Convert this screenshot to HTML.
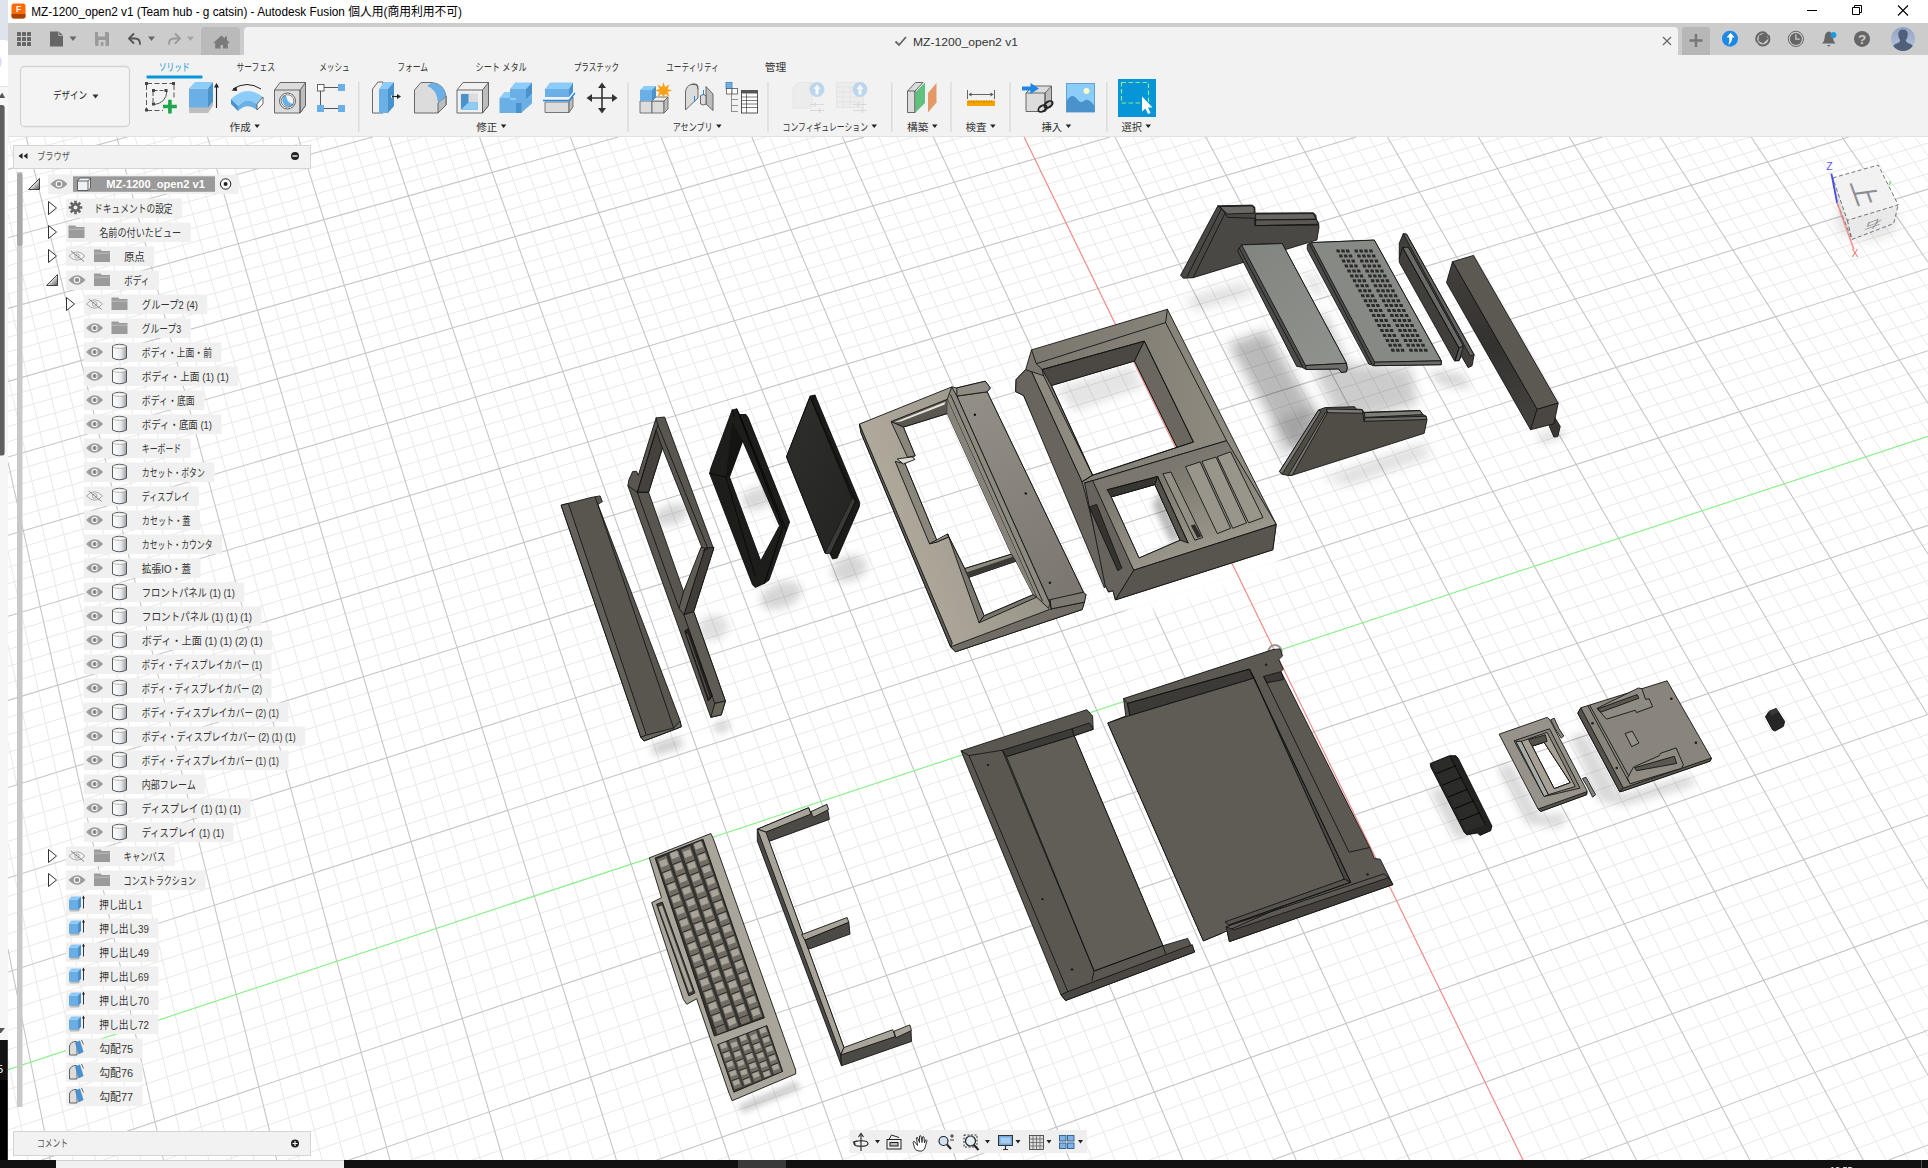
<!DOCTYPE html>
<html lang="ja"><head><meta charset="utf-8"><title>MZ-1200_open2 v1 - Autodesk Fusion</title>
<style>*{margin:0;padding:0}html,body{width:1928px;height:1168px;overflow:hidden;background:#fff}svg{display:block;position:absolute;left:0;top:0}text{font-family:'Liberation Sans','Noto Sans CJK JP',sans-serif;white-space:pre}</style></head><body>
<svg width="1928" height="1168" viewBox="0 0 1928 1168">
<defs><clipPath id="vpc"><rect x="8" y="137" width="1920" height="1023"/></clipPath>
<linearGradient id="avg" x1="0" y1="0" x2="0" y2="1"><stop offset="0" stop-color="#8fa3c4"/><stop offset="1" stop-color="#b9c6dc"/></linearGradient>
<linearGradient id="cyl" x1="0" y1="0" x2="1" y2="0"><stop offset="0" stop-color="#ffffff"/><stop offset="0.600" stop-color="#e8eaee"/><stop offset="1" stop-color="#9aa0aa"/></linearGradient>
<linearGradient id="expg" x1="0" y1="0" x2="1" y2="1"><stop offset="0.400" stop-color="#fff"/><stop offset="1" stop-color="#555"/></linearGradient>
<filter id="blur6" x="-30%" y="-30%" width="160%" height="160%"><feGaussianBlur stdDeviation="6"/></filter>
<filter id="blur4" x="-30%" y="-30%" width="160%" height="160%"><feGaussianBlur stdDeviation="4"/></filter>
<filter id="blur3" x="-30%" y="-30%" width="160%" height="160%"><feGaussianBlur stdDeviation="3"/></filter>
<linearGradient id="pan4" x1="0" y1="0" x2="1" y2="1"><stop offset="0" stop-color="#2f2f2e"/><stop offset="1" stop-color="#232322"/></linearGradient>
<linearGradient id="g5" gradientUnits="userSpaceOnUse" x1="860" y1="500" x2="1060" y2="440"><stop offset="0" stop-color="#b3ad9f"/><stop offset="1" stop-color="#8f8b81"/></linearGradient>
<linearGradient id="g5b" gradientUnits="userSpaceOnUse" x1="960" y1="390" x2="1080" y2="600"><stop offset="0" stop-color="#949087"/><stop offset="1" stop-color="#7a766f"/></linearGradient>
<linearGradient id="g6" gradientUnits="userSpaceOnUse" x1="1030" y1="380" x2="1250" y2="420"><stop offset="0" stop-color="#7b776e"/><stop offset="1" stop-color="#908c82"/></linearGradient>
<linearGradient id="g8" gradientUnits="userSpaceOnUse" x1="1250" y1="250" x2="1330" y2="360"><stop offset="0" stop-color="#838581"/><stop offset="1" stop-color="#8f918c"/></linearGradient>
<linearGradient id="g11" gradientUnits="userSpaceOnUse" x1="1450" y1="270" x2="1540" y2="420"><stop offset="0" stop-color="#413f3b"/><stop offset="0.5" stop-color="#34322f"/><stop offset="1" stop-color="#45433f"/></linearGradient>
<linearGradient id="g6p" gradientUnits="userSpaceOnUse" x1="1160" y1="470" x2="1200" y2="570"><stop offset="0" stop-color="#7b776e"/><stop offset="1" stop-color="#a19c90"/></linearGradient>

</defs>
<g clip-path="url(#vpc)">
<path d="M8.0 1059.6L27.7 1160.0M8.0 843.3L73.0 1160.0M8.0 742.0L95.6 1160.0M8.0 644.8L118.2 1160.0M8.0 551.6L140.9 1160.0M8.0 376.0L186.1 1160.0M8.0 293.2L208.8 1160.0M8.0 213.5L231.4 1160.0M8.0 142.6L28.9 137.0M8.1 137.0L254.1 1160.0M8.0 156.0L78.0 137.0M44.3 137.0L299.3 1160.0M8.0 182.9L176.2 137.0M62.4 137.0L322.0 1160.0M8.0 196.4L225.3 137.0M80.6 137.0L344.6 1160.0M8.0 210.1L274.5 137.0M98.7 137.0L367.3 1160.0M8.0 223.9L323.6 137.0M135.0 137.0L412.5 1160.0M8.0 251.7L421.9 137.0M153.1 137.0L435.2 1160.0M8.0 265.7L471.0 137.0M171.2 137.0L457.8 1160.0M8.0 279.8L520.1 137.0M189.4 137.0L480.5 1160.0M8.0 294.0L569.3 137.0M225.6 137.0L525.8 1160.0M8.0 322.8L667.6 137.0M243.8 137.0L548.4 1160.0M8.0 337.3L716.8 137.0M261.9 137.0L571.1 1160.0M8.0 351.9L765.9 137.0M280.0 137.0L593.7 1160.0M8.0 366.6L815.1 137.0M316.3 137.0L639.0 1160.0M8.0 396.3L913.5 137.0M334.4 137.0L661.7 1160.0M8.0 411.3L962.6 137.0M352.6 137.0L684.3 1160.0M8.0 426.5L1011.8 137.0M370.7 137.0L707.0 1160.0M8.0 441.7L1061.0 137.0M407.0 137.0L752.3 1160.0M8.0 472.4L1159.4 137.0M425.1 137.0L774.9 1160.0M8.0 488.0L1208.6 137.0M443.3 137.0L797.6 1160.0M8.0 503.6L1257.9 137.0M461.4 137.0L820.2 1160.0M8.0 519.4L1307.1 137.0M497.7 137.0L865.6 1160.0M8.0 551.2L1405.5 137.0M515.9 137.0L888.2 1160.0M8.0 567.3L1454.8 137.0M534.0 137.0L910.9 1160.0M8.0 583.6L1504.0 137.0M552.1 137.0L933.5 1160.0M8.0 599.9L1553.2 137.0M588.4 137.0L978.9 1160.0M8.0 632.9L1651.7 137.0M606.6 137.0L1001.5 1160.0M8.0 649.6L1701.0 137.0M624.7 137.0L1024.2 1160.0M8.0 666.4L1750.3 137.0M642.9 137.0L1046.9 1160.0M8.0 683.3L1799.5 137.0M679.2 137.0L1092.2 1160.0M8.0 717.5L1898.1 137.0M697.3 137.0L1114.9 1160.0M8.0 734.8L1928.0 143.0M715.5 137.0L1137.5 1160.0M8.0 752.3L1928.0 158.2M733.6 137.0L1160.2 1160.0M8.0 769.8L1928.0 173.6M769.9 137.0L1205.5 1160.0M8.0 805.3L1928.0 204.7M788.1 137.0L1228.2 1160.0M8.0 823.3L1928.0 220.5M806.2 137.0L1250.9 1160.0M8.0 841.4L1928.0 236.3M824.4 137.0L1273.6 1160.0M8.0 859.6L1928.0 252.3M860.7 137.0L1318.9 1160.0M8.0 896.5L1928.0 284.6M878.9 137.0L1341.6 1160.0M8.0 915.2L1928.0 300.9M897.0 137.0L1364.3 1160.0M8.0 933.9L1928.0 317.4M915.2 137.0L1386.9 1160.0M8.0 952.9L1928.0 334.0M951.5 137.0L1432.3 1160.0M8.0 991.2L1928.0 367.5M969.7 137.0L1455.0 1160.0M8.0 1010.6L1928.0 384.5M987.8 137.0L1477.6 1160.0M8.0 1030.1L1928.0 401.6M1006.0 137.0L1500.3 1160.0M8.0 1049.8L1928.0 418.9M1042.3 137.0L1545.7 1160.0M8.0 1089.7L1928.0 453.8M1060.5 137.0L1568.4 1160.0M8.0 1109.8L1928.0 471.4M1078.6 137.0L1591.1 1160.0M8.0 1130.1L1928.0 489.2M1096.8 137.0L1613.7 1160.0M8.0 1150.6L1928.0 507.2M1133.1 137.0L1659.1 1160.0M103.0 1160.0L1928.0 543.5M1151.3 137.0L1681.8 1160.0M164.5 1160.0L1928.0 561.9M1169.4 137.0L1704.5 1160.0M226.0 1160.0L1928.0 580.4M1187.6 137.0L1727.2 1160.0M287.5 1160.0L1928.0 599.1M1223.9 137.0L1772.6 1160.0M410.5 1160.0L1928.0 637.0M1242.1 137.0L1795.2 1160.0M472.1 1160.0L1928.0 656.1M1260.3 137.0L1817.9 1160.0M533.6 1160.0L1928.0 675.4M1278.5 137.0L1840.6 1160.0M595.1 1160.0L1928.0 694.9M1314.8 137.0L1886.0 1160.0M718.2 1160.0L1928.0 734.3M1333.0 137.0L1908.7 1160.0M779.8 1160.0L1928.0 754.3M1351.1 137.0L1928.0 1154.0M841.4 1160.0L1928.0 774.4M1369.3 137.0L1928.0 1114.3M902.9 1160.0L1928.0 794.7M1405.7 137.0L1928.0 1036.8M1026.1 1160.0L1928.0 835.9M1423.8 137.0L1928.0 998.9M1087.7 1160.0L1928.0 856.7M1442.0 137.0L1928.0 961.6M1149.3 1160.0L1928.0 877.7M1460.2 137.0L1928.0 924.9M1210.8 1160.0L1928.0 899.0M1496.5 137.0L1928.0 853.0M1334.1 1160.0L1928.0 941.9M1514.7 137.0L1928.0 817.8M1395.7 1160.0L1928.0 963.7M1532.9 137.0L1928.0 783.2M1457.3 1160.0L1928.0 985.7M1551.1 137.0L1928.0 749.0M1518.9 1160.0L1928.0 1007.8M1587.4 137.0L1928.0 682.1M1642.2 1160.0L1928.0 1052.7M1605.6 137.0L1928.0 649.4M1703.8 1160.0L1928.0 1075.5M1623.8 137.0L1928.0 617.1M1765.5 1160.0L1928.0 1098.5M1642.0 137.0L1928.0 585.3M1827.1 1160.0L1928.0 1121.6M1678.4 137.0L1928.0 522.9M1696.5 137.0L1928.0 492.4M1714.7 137.0L1928.0 462.3M1732.9 137.0L1928.0 432.5M1769.3 137.0L1928.0 374.2M1787.5 137.0L1928.0 345.7M1805.7 137.0L1928.0 317.5M1823.9 137.0L1928.0 289.7M1860.2 137.0L1928.0 235.1M1878.4 137.0L1928.0 208.3M1896.6 137.0L1928.0 181.8M1914.8 137.0L1928.0 155.7" stroke="#e9e9e9" stroke-width="1" fill="none"/>
<path d="M8.0 949.1L50.3 1160.0M8.0 462.1L163.5 1160.0M26.2 137.0L276.7 1160.0M8.0 169.4L127.1 137.0M116.8 137.0L389.9 1160.0M8.0 237.7L372.7 137.0M207.5 137.0L503.1 1160.0M8.0 308.4L618.4 137.0M298.2 137.0L616.4 1160.0M8.0 381.4L864.3 137.0M388.9 137.0L729.6 1160.0M8.0 457.0L1110.2 137.0M479.6 137.0L842.9 1160.0M8.0 535.3L1356.3 137.0M570.3 137.0L956.2 1160.0M8.0 616.3L1602.5 137.0M661.0 137.0L1069.5 1160.0M8.0 700.4L1848.8 137.0M751.8 137.0L1182.9 1160.0M8.0 787.5L1928.0 189.1M842.5 137.0L1296.2 1160.0M8.0 878.0L1928.0 268.4M933.3 137.0L1409.6 1160.0M8.0 972.0L1928.0 350.7M1114.9 137.0L1636.4 1160.0M41.5 1160.0L1928.0 525.3M1205.8 137.0L1749.9 1160.0M349.0 1160.0L1928.0 618.0M1296.6 137.0L1863.3 1160.0M656.7 1160.0L1928.0 714.5M1387.5 137.0L1928.0 1075.3M964.5 1160.0L1928.0 815.2M1478.4 137.0L1928.0 888.7M1272.5 1160.0L1928.0 920.3M1569.3 137.0L1928.0 715.3M1580.5 1160.0L1928.0 1030.2M1660.2 137.0L1928.0 553.9M1888.8 1160.0L1928.0 1145.0M1751.1 137.0L1928.0 403.2M1842.0 137.0L1928.0 262.2" stroke="#c6c6c6" stroke-width="1.1" fill="none"/>
<path d="M650.4 746.1L678.7 737.1L683.8 746.1L655.6 755.1Z" fill="#000" fill-opacity="0.22" filter="url(#blur4)"/>
<path d="M1119.1 597.3L1273.1 546.8L1283.7 568.1L1132.4 618.5 Z" fill="#fff" fill-opacity="0.95" filter="url(#blur4)"/>
<path d="M1055.4 387.6L1132.4 365.0L1143.0 387.6L1074.0 411.5Z" fill="#000" fill-opacity="0.1" filter="url(#blur4)"/>
<path d="M1183.7 299.6L1241.9 282.5L1259.0 292.7L1195.7 309.9Z" fill="#000" fill-opacity="0.13" filter="url(#blur6)"/>
<path d="M1427.8 369.7L1463.3 373.6L1471.2 389.3L1439.7 385.4Z" fill="#000" fill-opacity="0.15" filter="url(#blur4)"/>
<path d="M1536.1 434.6L1561.7 426.8L1565.7 436.6L1542.1 444.5Z" fill="#000" fill-opacity="0.12" filter="url(#blur4)"/>
<path d="M1270.6 423.0L1317.3 404.3L1302.3 441.7L1279.0 460.4Z" fill="#000" fill-opacity="0.12" filter="url(#blur6)"/>
<path d="M1321.0 479.0L1423.7 443.5L1431.2 454.8L1349.0 484.6Z" fill="#000" fill-opacity="0.14" filter="url(#blur6)"/>
<path d="M737.6 1105.6L796.2 1081.2L801.0 1088.5L742.5 1112.9Z" fill="#000" fill-opacity="0.2" filter="url(#blur3)"/>
<path d="M1429.6 791.1L1444.0 786.3L1470.3 835.4L1456.0 839.0Z" fill="#000" fill-opacity="0.16" filter="url(#blur4)"/>
<path d="M1496.7 767.1L1511.1 762.3L1539.9 815.1L1567.4 812.7L1561.4 827.1L1527.9 824.7Z" fill="#000" fill-opacity="0.15" filter="url(#blur4)"/>
<path d="M1570.0 737.1L1584.4 732.3L1620.3 794.7L1689.9 775.5L1695.9 785.1L1623.9 805.4L1600.0 801.8Z" fill="#000" fill-opacity="0.15" filter="url(#blur4)"/>
<ellipse cx="671.2" cy="514.6" rx="18.0" ry="10.1" fill="#000" fill-opacity="0.16" transform="rotate(-20 671.2 514.6)" filter="url(#blur4)"/>
<ellipse cx="712.6" cy="627.9" rx="16.2" ry="12.6" fill="#000" fill-opacity="0.12" transform="rotate(-20 712.6 627.9)" filter="url(#blur4)"/>
<ellipse cx="721.6" cy="726.8" rx="9.0" ry="6.5" fill="#000" fill-opacity="0.14" transform="rotate(-20 721.6 726.8)" filter="url(#blur3)"/>
<ellipse cx="757.6" cy="498.4" rx="16.1" ry="10.8" fill="#000" fill-opacity="0.15" transform="rotate(-20 757.6 498.4)" filter="url(#blur4)"/>
<ellipse cx="780.9" cy="595.5" rx="21.6" ry="12.6" fill="#000" fill-opacity="0.16" transform="rotate(-20 780.9 595.5)" filter="url(#blur4)"/>
<ellipse cx="849.2" cy="568.6" rx="18.0" ry="12.5" fill="#000" fill-opacity="0.16" transform="rotate(-20 849.2 568.6)" filter="url(#blur4)"/>
<path d="M1228.0 343.9L1265.9 330.5L1330.6 435.3L1294.9 453.2L1268.1 413.0Z" fill="#000" fill-opacity="0.27" filter="url(#blur6)"/>
<path d="M1323.9 310.4L1348.4 364.0L1410.9 368.4L1417.6 404.1L1370.7 415.3L1344.0 433.1L1317.2 377.3L1310.5 323.8Z" fill="#000" fill-opacity="0.2" filter="url(#blur6)"/>
<path d="M1301.6 270.3L1315.0 274.8L1326.1 297.1L1312.7 294.8Z" fill="#000" fill-opacity="0.1" filter="url(#blur4)"/>
<path d="M1160.3 491.1L1181.5 538.9L1170.9 542.9L1152.3 504.4Z" fill="#000" fill-opacity="0.28" filter="url(#blur3)"/>
<path d="M1024.1 137.0L1523.0 1160.0" stroke="#f08a8a" stroke-width="1.2" fill="none"/>
<path d="M8.0 1069.7L1928.0 436.3" stroke="#8cf08c" stroke-width="1.2" fill="none"/>
<path d="M561.1 505.2L590.9 497.5L600.1 495.9L602.4 501.6L598.0 504.2L599.1 507.5L680.0 720.4L681.3 726.8L673.6 729.9L644.0 741.0L640.7 737.1Z" fill="#595650" stroke="#151515" stroke-width="0.9" stroke-linejoin="round" />
<path d="M561.1 505.2L568.3 503.4L646.6 735.8L640.7 737.1Z" fill="#64615b" stroke="#151515" stroke-width="0.9" stroke-linejoin="round" />
<path d="M640.7 737.1L644.0 741.0L681.3 726.8L680.0 721.2L673.6 728.1L646.6 735.1Z" fill="#6a6761" stroke="#151515" stroke-width="0.9" stroke-linejoin="round" />
<path d="M595.2 497.0L673.6 728.1" fill="none" stroke="#151515" stroke-width="0.9" stroke-linecap="round" stroke-linejoin="round" />
<path d="M656.1 417.9L664.6 417.0L713.6 548.8L693.7 611.6L725.4 701.0L721.3 714.9L710.8 717.3L627.9 485.7L628.8 480.1L632.6 471.6L636.4 471.2L638.3 475.3ZM662.4 448.0L703.2 550.7L683.6 591.7L648.6 492.3Z" fill="#595650" fill-rule="evenodd" stroke="#151515" stroke-width="0.9" stroke-linejoin="round" />
<path d="M656.1 430.1L662.4 448.0L648.6 492.3L637.3 492.3Z" fill="#45423d" stroke="#151515" stroke-width="0.9" stroke-linejoin="round" />
<path d="M705.1 548.1L714.0 547.3L693.7 611.6L683.9 614.8Z" fill="#403d39" stroke="#151515" stroke-width="0.9" stroke-linejoin="round" />
<path d="M701.0 547.3L705.1 548.1L683.9 614.8L679.0 608.3L683.6 591.7Z" fill="#5f5c56" stroke="#151515" stroke-width="0.9" stroke-linejoin="round" />
<path d="M656.1 417.9L658.0 425.4L656.1 430.1L637.3 492.3L627.9 485.7" fill="none" stroke="#151515" stroke-width="0.9" stroke-linecap="round" stroke-linejoin="round" />
<path d="M658.0 425.4L707.9 548.8L703.2 550.7" fill="none" stroke="#151515" stroke-width="0.9" stroke-linecap="round" stroke-linejoin="round" />
<path d="M637.3 492.3L648.6 492.3" fill="none" stroke="#151515" stroke-width="0.9" stroke-linecap="round" stroke-linejoin="round" />
<path d="M637.3 492.3L679.0 608.3" fill="none" stroke="#151515" stroke-width="0.9" stroke-linecap="round" stroke-linejoin="round" />
<path d="M683.9 614.8L693.7 611.6L725.4 701.0L714.8 703.5Z" fill="#5f5c56" stroke="#151515" stroke-width="0.9" stroke-linejoin="round" />
<path d="M714.8 703.5L725.4 701.0L721.3 714.9L710.8 717.3Z" fill="#676459" stroke="#151515" stroke-width="0.9" stroke-linejoin="round" />
<path d="M684.7 631.1L688.0 628.7L712.4 696.2L708.3 701.0Z" fill="#24221f" stroke="#151515" stroke-width="0.9" stroke-linejoin="round" />
<path d="M687.2 634.3L709.1 697.0" fill="none" stroke="#55524c" stroke-width="1.2" stroke-linecap="round" stroke-linejoin="round" />
<path d="M732.2 409.9L736.8 408.9L739.6 414.5L746.0 414.5L748.2 417.8L789.6 522.1L786.5 530.4L769.0 580.1L764.4 583.4L755.2 587.5L752.5 584.7L709.6 473.4L711.0 467.8ZM742.7 441.1L779.5 525.8L760.7 560.8L729.5 477.0Z" fill="#1d1d1c" fill-rule="evenodd" stroke="#0c0c0c" stroke-width="0.9" stroke-linejoin="round" />
<path d="M732.2 421.8L742.7 441.1L729.5 477.0L725.8 477.0Z" fill="#141413" />
<path d="M736.8 408.9L782.8 526.7L764.4 583.4" fill="none" stroke="#050505" stroke-width="1" stroke-linecap="round" stroke-linejoin="round" />
<path d="M739.6 414.5L786.5 530.4" fill="none" stroke="#050505" stroke-width="0.8" stroke-linecap="round" stroke-linejoin="round" />
<path d="M709.6 473.4L725.8 477.0L755.2 576.4" fill="none" stroke="#050505" stroke-width="0.8" stroke-linecap="round" stroke-linejoin="round" />
<path d="M732.2 409.9L734.1 416.3" fill="none" stroke="#050505" stroke-width="0.8" stroke-linecap="round" stroke-linejoin="round" />
<path d="M810.1 396.0L815.0 395.1L816.9 399.7L859.8 502.8L859.2 506.9L837.1 558.0L832.5 559.0L829.8 553.4L825.2 553.4L786.5 456.8Z" fill="#1b1b1a" stroke="#0c0c0c" stroke-width="0.9" stroke-linejoin="round" />
<path d="M810.1 397.0L852.4 498.8L825.2 552.9L786.5 456.8Z" fill="url(#pan4)" stroke="#0c0c0c" stroke-width="0.8" stroke-linejoin="round" />
<path d="M852.4 498.8L855.5 501.0L830.3 554.0L825.2 552.9Z" fill="#3a3a38" />
<path d="M855.5 501.0L830.3 554.0" fill="none" stroke="#080808" stroke-width="0.8" stroke-linecap="round" stroke-linejoin="round" />
<path d="M815.0 395.1L812.3 401.6L810.1 397.0" fill="none" stroke="#080808" stroke-width="0.8" stroke-linecap="round" stroke-linejoin="round" />
<path d="M812.3 401.6L855.5 501.0" fill="none" stroke="#080808" stroke-width="0.8" stroke-linecap="round" stroke-linejoin="round" />
<path d="M859.4 424.1L951.8 386.9L956.8 387.9L985.3 381.2L990.3 387.9L987.1 391.8L1083.4 592.2L1085.9 594.7L1082.1 609.6L955.5 651.8L950.6 646.8L861.2 433.3ZM903.4 427.1L947.3 413.5L1011.4 554.2L964.7 568.6L948.8 536.8L937.4 541.8L905.1 463.9L915.1 455.7ZM968.7 577.3L1015.9 561.2L1033.2 594.7L984.1 615.8Z" fill="url(#g5)" fill-rule="evenodd" stroke="#151515" stroke-width="0.9" stroke-linejoin="round" />
<path d="M956.8 396.1L987.1 391.8L1083.4 592.2L1049.9 603.4Z" fill="url(#g5b)" stroke="#151515" stroke-width="0.9" stroke-linejoin="round" />
<path d="M956.8 387.9L985.3 381.2L990.3 387.9L987.1 391.8L956.8 396.1Z" fill="#8f8b82" stroke="#151515" stroke-width="0.9" stroke-linejoin="round" />
<path d="M947.3 399.3L951.8 386.9L956.8 396.1L1049.9 603.4L1048.6 608.4L1036.7 597.2Z" fill="#8d897f" stroke="#151515" stroke-width="0.9" stroke-linejoin="round" />
<path d="M950.6 394.8L1042.4 600.9" fill="none" stroke="#151515" stroke-width="0.9" stroke-linecap="round" stroke-linejoin="round" />
<path d="M891.0 421.6L947.3 399.3L947.3 413.5L903.4 427.1Z" fill="#5a5751" stroke="#151515" stroke-width="0.9" stroke-linejoin="round" />
<path d="M893.5 422.6L945.6 401.8L944.3 404.8L900.9 421.6Z" fill="#e4e1da" />
<path d="M891.0 421.6L903.4 427.1L915.1 455.7L907.6 457.4Z" fill="#8a867c" stroke="#151515" stroke-width="0.9" stroke-linejoin="round" />
<path d="M895.2 461.4L905.1 463.9L937.4 541.8L929.5 543.8Z" fill="#8a867c" stroke="#151515" stroke-width="0.9" stroke-linejoin="round" />
<path d="M947.3 399.3L1036.7 597.2L1033.2 594.7L1015.9 561.2L1011.4 554.2L947.3 413.5Z" fill="#87837a" />
<path d="M897.2 458.9L912.1 456.9L915.1 459.4L903.4 463.9Z" fill="#e0ddd5" stroke="#151515" stroke-width="0.9" stroke-linejoin="round" />
<path d="M929.5 543.8L947.6 533.9L948.8 536.8L937.4 541.8Z" fill="#8f8b81" stroke="#151515" stroke-width="0.9" stroke-linejoin="round" />
<path d="M947.6 533.9L948.8 536.8L964.7 568.6L968.7 577.3L984.1 615.8L979.1 622.8Z" fill="#7c786f" stroke="#151515" stroke-width="0.9" stroke-linejoin="round" />
<path d="M979.1 622.8L984.1 615.8L1033.2 594.7L1036.7 597.2Z" fill="#7a766d" stroke="#151515" stroke-width="0.9" stroke-linejoin="round" />
<path d="M964.7 568.6L1011.4 554.2L1015.9 561.2L968.7 577.3Z" fill="#8e8a80" stroke="#151515" stroke-width="0.9" stroke-linejoin="round" />
<path d="M966.2 572.4L1012.6 556.7L1015.9 561.2L968.7 577.3Z" fill="#3b3936" />
<path d="M950.6 646.8L955.5 651.8L1082.1 609.6L1084.6 602.1L1051.1 608.9Z" fill="#716d65" stroke="#151515" stroke-width="0.9" stroke-linejoin="round" />
<path d="M859.4 424.1L861.2 433.3L950.6 646.8L952.3 643.1Z" fill="#5f5c55" stroke="#151515" stroke-width="0.9" stroke-linejoin="round" />
<path d="M1049.9 599.7L1083.4 592.2L1085.9 594.7L1084.6 602.1L1051.1 608.9Z" fill="#7d7970" stroke="#151515" stroke-width="0.9" stroke-linejoin="round" />
<path d="M1049.9 599.7L1051.1 608.9" fill="none" stroke="#151515" stroke-width="0.9" stroke-linecap="round" stroke-linejoin="round" />
<circle cx="974.9" cy="414.7" r="1.2" fill="#111"/>
<circle cx="1025.8" cy="493.4" r="1.2" fill="#111"/>
<circle cx="1049.9" cy="582.8" r="1.2" fill="#111"/>
<path d="M1031.5 349.9L1167.4 309.3L1276.2 524.3L1272.8 549.8L1115.4 599.9L1113.0 590.6L1108.5 592.0L1105.1 585.1L1107.2 580.0L1023.6 395.5L1015.6 391.6L1016.1 379.6L1025.7 369.5ZM1051.4 385.5L1134.5 361.0L1177.0 447.3L1092.6 475.2ZM1111.2 496.9L1155.0 484.5L1180.2 540.2L1139.0 558.0Z" fill="url(#g6)" fill-rule="evenodd" stroke="#151515" stroke-width="0.9" stroke-linejoin="round" />
<path d="M1042.2 369.5L1144.3 341.1L1134.5 361.0L1051.4 385.5Z" fill="#4b4843" stroke="#151515" stroke-width="0.9" stroke-linejoin="round" />
<path d="M1144.3 341.1L1193.4 442.0L1177.0 447.3L1134.5 361.0Z" fill="#6b675f" stroke="#151515" stroke-width="0.9" stroke-linejoin="round" />
<path d="M1031.5 371.7L1043.5 375.6L1092.6 475.2L1082.0 481.8Z" fill="#8e8a80" stroke="#151515" stroke-width="0.9" stroke-linejoin="round" />
<path d="M1015.6 391.6L1016.1 379.6L1025.7 369.5L1031.5 371.7L1082.0 481.8L1084.6 491.1L1107.2 580.0L1104.5 588.0L1023.6 395.5Z" fill="#69655e" stroke="#151515" stroke-width="0.9" stroke-linejoin="round" />
<path d="M1031.5 349.9L1036.3 363.7L1165.6 322.6L1167.4 309.3" fill="none" stroke="#151515" stroke-width="0.9" stroke-linecap="round" stroke-linejoin="round" />
<path d="M1165.6 322.6L1226.6 440.7L1084.6 483.1" fill="none" stroke="#151515" stroke-width="0.9" stroke-linecap="round" stroke-linejoin="round" />
<path d="M1036.3 363.7L1042.2 369.5L1043.5 375.6" fill="none" stroke="#151515" stroke-width="0.9" stroke-linecap="round" stroke-linejoin="round" />
<path d="M1042.2 369.5L1144.3 341.1L1193.4 442.0L1092.6 475.2L1051.4 385.5" fill="none" stroke="#151515" stroke-width="0.9" stroke-linecap="round" stroke-linejoin="round" />
<path d="M1092.6 475.2L1082.0 481.8" fill="none" stroke="#151515" stroke-width="0.9" stroke-linecap="round" stroke-linejoin="round" />
<path d="M1084.6 483.1L1226.6 440.7L1276.2 524.3L1133.7 570.2ZM1111.2 496.9L1155.0 484.5L1180.2 540.2L1139.0 558.0Z" fill="url(#g6p)" fill-rule="evenodd" stroke="#151515" stroke-width="0.9" stroke-linejoin="round" />
<path d="M1107.2 489.8L1157.6 476.5L1155.0 484.5L1111.2 496.9Z" fill="#383633" stroke="#151515" stroke-width="0.9" stroke-linejoin="round" />
<path d="M1157.6 476.5L1188.1 542.9L1180.2 540.2L1155.0 484.5Z" fill="#55524c" stroke="#151515" stroke-width="0.9" stroke-linejoin="round" />
<path d="M1107.2 489.8L1157.6 476.5L1188.1 542.9" fill="none" stroke="#151515" stroke-width="0.9" stroke-linecap="round" stroke-linejoin="round" />
<path d="M1115.4 599.9L1272.8 549.8L1276.2 524.5L1133.7 570.2Z" fill="#58554f" stroke="#151515" stroke-width="0.9" stroke-linejoin="round" />
<path d="M1084.6 483.1L1092.6 480.5L1133.7 570.2L1115.4 599.9L1113.0 590.6L1108.5 592.0L1105.1 585.1Z" fill="#67635c" stroke="#151515" stroke-width="0.9" stroke-linejoin="round" />
<path d="M1089.4 507.0L1096.6 504.4L1121.8 568.1L1117.8 570.7Z" fill="#35332f" stroke="#151515" stroke-width="0.9" stroke-linejoin="round" />
<path d="M1185.5 466.7L1200.1 461.9L1230.6 528.3L1217.3 533.6Z" fill="#9a958a" stroke="#151515" stroke-width="0.9" stroke-linejoin="round" />
<path d="M1201.9 461.4L1216.0 457.1L1246.5 522.9L1232.7 528.3Z" fill="#9a958a" stroke="#151515" stroke-width="0.9" stroke-linejoin="round" />
<path d="M1217.3 456.6L1230.6 451.8L1263.0 517.6L1248.6 522.9Z" fill="#9a958a" stroke="#151515" stroke-width="0.9" stroke-linejoin="round" />
<path d="M1162.9 473.8L1170.9 472.0L1202.7 537.5L1194.8 540.2Z" fill="#948f85" stroke="#151515" stroke-width="0.9" stroke-linejoin="round" />
<path d="M1190.8 525.6L1194.8 524.3L1201.4 536.2L1197.4 538.1Z" fill="#2e2c2a" />
<path d="M1180.6 275.3L1217.9 205.8L1252.2 205.1L1254.8 207.1L1255.1 213.1L1313.5 212.8L1315.9 215.3L1316.4 219.5L1318.6 223.4L1319.0 227.3L1316.9 240.0L1193.1 277.7L1183.4 278.2Z" fill="#4a4844" stroke="#151515" stroke-width="0.9" stroke-linejoin="round" />
<path d="M1219.7 206.6L1252.2 205.9L1254.2 208.5L1254.2 213.1L1227.4 214.0L1224.8 211.4Z" fill="#6a6863" stroke="#151515" stroke-width="0.9" stroke-linejoin="round" />
<path d="M1255.6 214.0L1313.5 213.6L1315.9 219.1L1255.6 220.0Z" fill="#686661" stroke="#151515" stroke-width="0.9" stroke-linejoin="round" />
<path d="M1255.6 220.0L1316.4 219.5L1318.6 224.2L1255.6 225.6Z" fill="#5a5853" stroke="#151515" stroke-width="0.9" stroke-linejoin="round" />
<path d="M1193.1 277.7L1225.1 213.1L1227.4 217.4L1254.8 218.3L1254.8 225.6L1318.6 225.1" fill="none" stroke="#151515" stroke-width="0.9" stroke-linecap="round" stroke-linejoin="round" />
<path d="M1187.1 276.5L1221.4 208.8" fill="none" stroke="#151515" stroke-width="0.9" stroke-linecap="round" stroke-linejoin="round" />
<path d="M1217.9 205.8L1221.4 208.8L1225.1 213.1" fill="none" stroke="#151515" stroke-width="0.9" stroke-linecap="round" stroke-linejoin="round" />
<path d="M1237.6 250.8L1241.6 244.8L1282.2 243.6L1346.4 363.3L1347.2 368.1L1346.4 371.8L1341.2 372.4L1338.7 368.9L1306.1 369.5L1301.8 367.2L1296.7 366.4Z" fill="#4c4d4a" stroke="#151515" stroke-width="0.9" stroke-linejoin="round" />
<path d="M1241.6 244.8L1282.2 243.6L1346.4 363.3L1305.6 365.5Z" fill="url(#g8)" stroke="#151515" stroke-width="0.9" stroke-linejoin="round" />
<path d="M1305.6 365.5L1346.4 363.3L1347.2 368.1L1346.4 371.8L1341.2 372.4L1338.7 368.9L1306.1 369.5Z" fill="#6c6d68" stroke="#151515" stroke-width="0.9" stroke-linejoin="round" />
<path d="M1239.3 248.2L1302.7 366.7" fill="none" stroke="#151515" stroke-width="0.9" stroke-linecap="round" stroke-linejoin="round" />
<path d="M1307.3 244.6L1311.3 242.6L1374.3 240.1L1441.2 360.8L1441.2 364.7L1373.7 365.7L1368.8 364.1L1307.3 249.5Z" fill="#4b4c49" stroke="#151515" stroke-width="0.9" stroke-linejoin="round" />
<path d="M1311.3 242.6L1374.3 240.1L1441.2 360.8L1374.7 362.2Z" fill="#878985" stroke="#151515" stroke-width="0.9" stroke-linejoin="round" />
<path d="M1374.7 362.2L1441.2 360.8L1441.2 364.7L1373.7 365.7Z" fill="#6b6d68" stroke="#151515" stroke-width="0.9" stroke-linejoin="round" />
<path d="M1309.3 243.6L1371.7 363.8" fill="none" stroke="#151515" stroke-width="0.9" stroke-linecap="round" stroke-linejoin="round" />
<path d="M1336.1 249.5h3.4l0.7 3h-3.4zM1341.0 249.5h3.4l0.7 3h-3.4zM1345.7 249.5h3.4l0.7 3h-3.4zM1354.2 249.5h3.4l0.7 3h-3.4zM1359.1 249.5h3.4l0.7 3h-3.4zM1364.0 249.5h3.4l0.7 3h-3.4zM1369.0 249.5h3.4l0.7 3h-3.4zM1338.8 254.5h3.4l0.7 3h-3.4zM1343.7 254.5h3.4l0.7 3h-3.4zM1348.5 254.5h3.4l0.7 3h-3.4zM1356.9 254.5h3.4l0.7 3h-3.4zM1361.9 254.5h3.4l0.7 3h-3.4zM1366.8 254.5h3.4l0.7 3h-3.4zM1371.7 254.5h3.4l0.7 3h-3.4zM1341.6 259.5h3.4l0.7 3h-3.4zM1346.5 259.5h3.4l0.7 3h-3.4zM1351.2 259.5h3.4l0.7 3h-3.4zM1359.7 259.5h3.4l0.7 3h-3.4zM1364.6 259.5h3.4l0.7 3h-3.4zM1369.5 259.5h3.4l0.7 3h-3.4zM1374.4 259.5h3.4l0.7 3h-3.4zM1344.3 264.4h3.4l0.7 3h-3.4zM1349.2 264.4h3.4l0.7 3h-3.4zM1353.9 264.4h3.4l0.7 3h-3.4zM1362.4 264.4h3.4l0.7 3h-3.4zM1367.3 264.4h3.4l0.7 3h-3.4zM1372.3 264.4h3.4l0.7 3h-3.4zM1377.2 264.4h3.4l0.7 3h-3.4zM1347.0 269.4h3.4l0.7 3h-3.4zM1352.0 269.4h3.4l0.7 3h-3.4zM1356.7 269.4h3.4l0.7 3h-3.4zM1365.1 269.4h3.4l0.7 3h-3.4zM1370.1 269.4h3.4l0.7 3h-3.4zM1375.0 269.4h3.4l0.7 3h-3.4zM1379.9 269.4h3.4l0.7 3h-3.4zM1349.8 274.4h3.4l0.7 3h-3.4zM1354.7 274.4h3.4l0.7 3h-3.4zM1359.4 274.4h3.4l0.7 3h-3.4zM1367.9 274.4h3.4l0.7 3h-3.4zM1372.8 274.4h3.4l0.7 3h-3.4zM1377.7 274.4h3.4l0.7 3h-3.4zM1382.7 274.4h3.4l0.7 3h-3.4zM1352.5 279.3h3.4l0.7 3h-3.4zM1357.4 279.3h3.4l0.7 3h-3.4zM1362.2 279.3h3.4l0.7 3h-3.4zM1370.6 279.3h3.4l0.7 3h-3.4zM1375.5 279.3h3.4l0.7 3h-3.4zM1380.5 279.3h3.4l0.7 3h-3.4zM1385.4 279.3h3.4l0.7 3h-3.4zM1355.2 284.3h3.4l0.7 3h-3.4zM1360.2 284.3h3.4l0.7 3h-3.4zM1364.9 284.3h3.4l0.7 3h-3.4zM1373.4 284.3h3.4l0.7 3h-3.4zM1378.3 284.3h3.4l0.7 3h-3.4zM1383.2 284.3h3.4l0.7 3h-3.4zM1388.1 284.3h3.4l0.7 3h-3.4zM1358.0 289.2h3.4l0.7 3h-3.4zM1362.9 289.2h3.4l0.7 3h-3.4zM1367.6 289.2h3.4l0.7 3h-3.4zM1376.1 289.2h3.4l0.7 3h-3.4zM1381.0 289.2h3.4l0.7 3h-3.4zM1385.9 289.2h3.4l0.7 3h-3.4zM1390.9 289.2h3.4l0.7 3h-3.4zM1360.7 294.2h3.4l0.7 3h-3.4zM1365.6 294.2h3.4l0.7 3h-3.4zM1370.4 294.2h3.4l0.7 3h-3.4zM1378.8 294.2h3.4l0.7 3h-3.4zM1383.8 294.2h3.4l0.7 3h-3.4zM1388.7 294.2h3.4l0.7 3h-3.4zM1393.6 294.2h3.4l0.7 3h-3.4zM1363.5 299.2h3.4l0.7 3h-3.4zM1368.4 299.2h3.4l0.7 3h-3.4zM1373.1 299.2h3.4l0.7 3h-3.4zM1381.6 299.2h3.4l0.7 3h-3.4zM1386.5 299.2h3.4l0.7 3h-3.4zM1391.4 299.2h3.4l0.7 3h-3.4zM1396.3 299.2h3.4l0.7 3h-3.4zM1366.2 304.1h3.4l0.7 3h-3.4zM1371.1 304.1h3.4l0.7 3h-3.4zM1375.8 304.1h3.4l0.7 3h-3.4zM1384.3 304.1h3.4l0.7 3h-3.4zM1389.2 304.1h3.4l0.7 3h-3.4zM1394.2 304.1h3.4l0.7 3h-3.4zM1399.1 304.1h3.4l0.7 3h-3.4zM1368.9 309.1h3.4l0.7 3h-3.4zM1373.9 309.1h3.4l0.7 3h-3.4zM1378.6 309.1h3.4l0.7 3h-3.4zM1387.0 309.1h3.4l0.7 3h-3.4zM1392.0 309.1h3.4l0.7 3h-3.4zM1396.9 309.1h3.4l0.7 3h-3.4zM1401.8 309.1h3.4l0.7 3h-3.4zM1371.7 314.1h3.4l0.7 3h-3.4zM1376.6 314.1h3.4l0.7 3h-3.4zM1381.3 314.1h3.4l0.7 3h-3.4zM1389.8 314.1h3.4l0.7 3h-3.4zM1394.7 314.1h3.4l0.7 3h-3.4zM1399.6 314.1h3.4l0.7 3h-3.4zM1404.6 314.1h3.4l0.7 3h-3.4zM1374.4 319.0h3.4l0.7 3h-3.4zM1379.3 319.0h3.4l0.7 3h-3.4zM1384.1 319.0h3.4l0.7 3h-3.4zM1392.5 319.0h3.4l0.7 3h-3.4zM1397.4 319.0h3.4l0.7 3h-3.4zM1402.4 319.0h3.4l0.7 3h-3.4zM1407.3 319.0h3.4l0.7 3h-3.4zM1377.1 324.0h3.4l0.7 3h-3.4zM1382.1 324.0h3.4l0.7 3h-3.4zM1386.8 324.0h3.4l0.7 3h-3.4zM1395.3 324.0h3.4l0.7 3h-3.4zM1400.2 324.0h3.4l0.7 3h-3.4zM1405.1 324.0h3.4l0.7 3h-3.4zM1410.0 324.0h3.4l0.7 3h-3.4zM1379.9 328.9h3.4l0.7 3h-3.4zM1384.8 328.9h3.4l0.7 3h-3.4zM1389.5 328.9h3.4l0.7 3h-3.4zM1398.0 328.9h3.4l0.7 3h-3.4zM1402.9 328.9h3.4l0.7 3h-3.4zM1407.8 328.9h3.4l0.7 3h-3.4zM1412.8 328.9h3.4l0.7 3h-3.4zM1382.6 333.9h3.4l0.7 3h-3.4zM1387.5 333.9h3.4l0.7 3h-3.4zM1392.3 333.9h3.4l0.7 3h-3.4zM1400.7 333.9h3.4l0.7 3h-3.4zM1405.7 333.9h3.4l0.7 3h-3.4zM1410.6 333.9h3.4l0.7 3h-3.4zM1415.5 333.9h3.4l0.7 3h-3.4zM1385.4 338.9h3.4l0.7 3h-3.4zM1390.3 338.9h3.4l0.7 3h-3.4zM1395.0 338.9h3.4l0.7 3h-3.4zM1403.5 338.9h3.4l0.7 3h-3.4zM1408.4 338.9h3.4l0.7 3h-3.4zM1413.3 338.9h3.4l0.7 3h-3.4zM1418.2 338.9h3.4l0.7 3h-3.4zM1388.1 343.8h3.4l0.7 3h-3.4zM1393.0 343.8h3.4l0.7 3h-3.4zM1397.7 343.8h3.4l0.7 3h-3.4zM1406.2 343.8h3.4l0.7 3h-3.4zM1411.1 343.8h3.4l0.7 3h-3.4zM1416.1 343.8h3.4l0.7 3h-3.4zM1421.0 343.8h3.4l0.7 3h-3.4zM1390.8 348.8h3.4l0.7 3h-3.4zM1395.8 348.8h3.4l0.7 3h-3.4zM1400.5 348.8h3.4l0.7 3h-3.4zM1408.9 348.8h3.4l0.7 3h-3.4zM1413.9 348.8h3.4l0.7 3h-3.4zM1418.8 348.8h3.4l0.7 3h-3.4zM1423.7 348.8h3.4l0.7 3h-3.4z" fill="#2a2b29"/>
<path d="M1399.3 243.2L1403.2 233.8L1406.6 234.2L1474.1 354.9L1472.1 365.7L1468.2 367.7L1461.3 355.9L1459.0 360.8L1454.4 360.8L1399.3 262.3Z" fill="#403f3c" stroke="#151515" stroke-width="0.9" stroke-linejoin="round" />
<path d="M1402.6 247.6L1408.2 247.2L1463.3 346.0L1459.0 348.0Z" fill="#6a6a66" stroke="#151515" stroke-width="0.9" stroke-linejoin="round" />
<path d="M1403.2 233.8L1406.6 234.2L1474.1 354.9L1470.2 355.9Z" fill="#62625e" stroke="#151515" stroke-width="0.9" stroke-linejoin="round" />
<path d="M1459.0 348.0L1463.3 346.0L1459.3 360.2L1455.0 360.8Z" fill="#5a5a56" stroke="#151515" stroke-width="0.9" stroke-linejoin="round" />
<path d="M1399.3 258.4L1402.6 247.6L1459.0 348.0L1455.0 360.8" fill="none" stroke="#151515" stroke-width="0.9" stroke-linecap="round" stroke-linejoin="round" />
<path d="M1548.4 417.9L1553.9 415.9L1560.2 426.4L1557.8 436.6L1553.9 437.0L1549.5 426.8Z" fill="#3a3835" stroke="#151515" stroke-width="0.9" stroke-linejoin="round" />
<path d="M1452.5 261.7L1473.5 255.4L1558.2 403.1L1537.1 409.4Z" fill="#5c5952" stroke="#151515" stroke-width="0.9" stroke-linejoin="round" />
<path d="M1446.5 282.6L1452.5 261.7L1537.1 409.4L1530.6 429.7Z" fill="url(#g11)" stroke="#151515" stroke-width="0.9" stroke-linejoin="round" />
<path d="M1537.1 409.4L1558.2 403.1L1553.9 423.8L1530.6 429.7Z" fill="#4a4743" stroke="#151515" stroke-width="0.9" stroke-linejoin="round" />
<path d="M1279.5 471.6L1318.7 409.9L1325.2 407.6L1354.6 406.7L1356.0 409.0L1362.1 409.5L1364.0 412.3L1420.0 410.4L1422.8 414.6L1426.0 416.0L1427.0 419.7L1424.2 433.3L1292.1 475.3L1288.3 475.5L1281.8 474.2Z" fill="#504d47" stroke="#151515" stroke-width="0.9" stroke-linejoin="round" />
<path d="M1326.6 409.0L1362.1 409.8L1363.0 413.2L1327.6 412.7Z" fill="#7c7d77" stroke="#151515" stroke-width="0.9" stroke-linejoin="round" />
<path d="M1364.4 412.7L1420.0 410.7L1422.8 414.6L1364.9 417.4Z" fill="#7c7d77" stroke="#151515" stroke-width="0.9" stroke-linejoin="round" />
<path d="M1364.9 417.9L1426.0 416.3L1426.7 419.5L1364.4 421.3Z" fill="#6a6b66" stroke="#151515" stroke-width="0.9" stroke-linejoin="round" />
<path d="M1279.5 471.6L1318.7 409.9L1321.0 411.3L1282.3 473.9Z" fill="#7a7b75" stroke="#151515" stroke-width="0.9" stroke-linejoin="round" />
<path d="M1288.3 475.3L1325.7 412.3L1327.4 412.7L1292.1 475.3Z" fill="#74756f" stroke="#151515" stroke-width="0.9" stroke-linejoin="round" />
<path d="M1363.0 413.7L1364.0 421.6" fill="none" stroke="#151515" stroke-width="0.9" stroke-linecap="round" stroke-linejoin="round" />
<path d="M961.1 750.9L1086.8 709.7L1092.6 716.0L1093.2 729.3L1074.2 735.7L1162.9 945.7L1187.6 938.4L1194.6 952.0L1065.6 1000.5L1060.9 994.8Z" fill="#5a5751" stroke="#151515" stroke-width="0.9" stroke-linejoin="round" />
<path d="M1006.4 756.6L1074.2 735.7L1162.9 945.7L1094.1 971.0Z" fill="#615e58" stroke="#151515" stroke-width="0.9" stroke-linejoin="round" />
<path d="M1002.3 750.2L1072.0 728.7L1074.2 735.7L1006.4 756.6Z" fill="#3d3b37" stroke="#151515" stroke-width="0.9" stroke-linejoin="round" />
<path d="M1072.0 728.7L1089.4 723.0L1093.2 729.3L1074.2 735.7Z" fill="#45423e" stroke="#151515" stroke-width="0.9" stroke-linejoin="round" />
<path d="M1060.9 994.8L1065.6 1000.5L1194.6 952.0L1192.3 944.7L1067.8 991.6Z" fill="#4a4743" stroke="#151515" stroke-width="0.9" stroke-linejoin="round" />
<path d="M961.1 750.9L969.0 755.6L1067.8 991.6" fill="none" stroke="#151515" stroke-width="0.9" stroke-linecap="round" stroke-linejoin="round" />
<path d="M969.0 755.6L1002.3 750.2L1094.1 971.0L1162.9 945.7" fill="none" stroke="#151515" stroke-width="0.9" stroke-linecap="round" stroke-linejoin="round" />
<path d="M1094.1 971.0L1091.9 980.5" fill="none" stroke="#151515" stroke-width="0.9" stroke-linecap="round" stroke-linejoin="round" />
<path d="M1162.9 945.7L1165.4 953.6" fill="none" stroke="#151515" stroke-width="0.9" stroke-linecap="round" stroke-linejoin="round" />
<circle cx="988.0" cy="765.1" r="1.2" fill="#1a1a1a"/>
<circle cx="1042.5" cy="899.1" r="1.2" fill="#1a1a1a"/>
<circle cx="1072.0" cy="969.5" r="1.2" fill="#1a1a1a"/>
<circle cx="1275" cy="651.5" r="6.5" fill="none" stroke="#9a9a9a" stroke-width="2.2"/>
<path d="M1123.6 698.6L1273.1 649.5L1280.1 648.9L1282.6 655.8L1278.8 659.6L1283.3 669.1L1281.0 671.7L1369.7 847.5L1374.5 858.6L1380.2 859.2L1392.9 884.6L1229.4 941.6L1226.2 926.7L1222.4 933.0L1203.4 940.9L1107.8 723.0L1125.8 716.0Z" fill="#5c5953" stroke="#151515" stroke-width="0.9" stroke-linejoin="round" />
<path d="M1107.8 723.0L1129.9 715.4L1254.1 678.0L1344.4 879.2L1222.4 933.0L1203.4 940.9Z" fill="#5f5c56" stroke="#151515" stroke-width="0.9" stroke-linejoin="round" />
<path d="M1127.4 703.4L1249.4 669.1L1254.1 678.0L1129.9 715.4Z" fill="#3c3a36" stroke="#151515" stroke-width="0.9" stroke-linejoin="round" />
<path d="M1249.4 669.1L1254.1 678.0L1344.4 879.2L1350.7 882.3Z" fill="#4a4844" stroke="#151515" stroke-width="0.9" stroke-linejoin="round" />
<path d="M1344.4 879.2L1350.7 882.3L1228.8 925.1L1225.0 921.9Z" fill="#56534d" stroke="#151515" stroke-width="0.9" stroke-linejoin="round" />
<path d="M1263.6 676.4L1281.0 671.7L1283.3 679.6L1266.8 682.8Z" fill="#3c3a36" stroke="#151515" stroke-width="0.9" stroke-linejoin="round" />
<path d="M1226.2 926.7L1233.5 929.9L1388.7 877.6L1392.9 884.6L1229.4 941.6Z" fill="#45423e" stroke="#151515" stroke-width="0.9" stroke-linejoin="round" />
<path d="M1123.6 698.6L1127.4 703.4L1249.4 669.1L1350.7 882.3L1228.8 925.1" fill="none" stroke="#151515" stroke-width="0.9" stroke-linecap="round" stroke-linejoin="round" />
<path d="M1127.4 703.4L1129.9 715.4" fill="none" stroke="#151515" stroke-width="0.9" stroke-linecap="round" stroke-linejoin="round" />
<path d="M1266.8 682.8L1349.1 852.2L1369.7 847.5" fill="none" stroke="#151515" stroke-width="0.9" stroke-linecap="round" stroke-linejoin="round" />
<path d="M1263.6 676.4L1266.8 682.8" fill="none" stroke="#151515" stroke-width="0.9" stroke-linecap="round" stroke-linejoin="round" />
<path d="M1226.2 926.7L1384.0 873.8L1388.7 877.6" fill="none" stroke="#151515" stroke-width="0.9" stroke-linecap="round" stroke-linejoin="round" />
<circle cx="1266.1" cy="664.7" r="1.2" fill="#1a1a1a"/>
<circle cx="1367.5" cy="874.4" r="1.2" fill="#1a1a1a"/>
<path d="M649.3 857.9L710.8 833.5L713.2 838.4L795.7 1070.2L795.7 1073.9L732.2 1100.7L729.1 1093.4L696.6 998.7L686.8 1004.3L683.4 999.5L651.7 902.6L661.5 897.7Z" fill="#aaa59a" stroke="#151515" stroke-width="0.9" stroke-linejoin="round" />
<path d="M655.1 857.9L703.0 839.2L764.4 1017.8L714.4 1036.1Z" fill="#35332f" stroke="#151515" stroke-width="0.9" stroke-linejoin="round" />
<path d="M717.6 1044.6L766.9 1025.6L782.7 1071.4L733.9 1092.2Z" fill="#403e3a" stroke="#151515" stroke-width="0.9" stroke-linejoin="round" />
<path d="M656.6 904.3L662.4 902.1L694.9 992.9L688.8 995.8Z" fill="#403e3a" stroke="#151515" stroke-width="0.9" stroke-linejoin="round" />
<path d="M658.5 906.7L662.0 905.5L692.5 990.9L689.3 992.4Z" fill="#a9a499" />
<path d="M702.1 841.5L693.0 845.1L753.3 1020.1L762.4 1016.5ZM690.2 846.2L681.1 849.8L741.4 1024.8L750.4 1021.2ZM678.2 850.9L669.1 854.5L729.4 1029.5L738.5 1025.9ZM666.3 855.6L657.2 859.2L717.4 1034.2L726.5 1030.6Z" fill="#716d65"/><path d="M700.9 841.0L693.7 843.9L695.8 849.8L702.9 847.0ZM705.0 853.0L697.8 855.8L699.9 861.7L707.0 858.9ZM709.1 864.9L701.9 867.7L704.0 873.6L711.1 870.8ZM713.2 876.8L706.0 879.6L708.1 885.5L715.2 882.7ZM717.3 888.7L710.1 891.5L712.2 897.4L719.3 894.6ZM721.4 900.6L714.2 903.4L716.3 909.4L723.4 906.5ZM725.5 912.5L718.3 915.3L720.4 921.3L727.5 918.4ZM729.6 924.4L722.4 927.2L724.5 933.2L731.6 930.4ZM733.7 936.3L726.5 939.1L728.6 945.1L735.7 942.3ZM737.8 948.2L730.6 951.0L732.7 957.0L739.8 954.2ZM741.9 960.1L734.7 962.9L736.8 968.9L743.9 966.1ZM746.0 972.0L738.8 974.8L740.9 980.8L748.0 978.0ZM750.1 983.9L742.9 986.8L745.0 992.7L752.1 989.9ZM754.2 995.8L747.0 998.7L749.1 1004.6L756.2 1001.8ZM758.3 1007.7L751.1 1010.6L753.2 1016.5L760.3 1013.7ZM690.2 849.3L683.0 852.1L685.0 858.1L692.2 855.3ZM694.3 861.2L687.1 864.0L689.1 870.0L696.3 867.2ZM698.4 873.1L691.2 875.9L693.2 881.9L700.4 879.1ZM702.5 885.0L695.3 887.9L697.3 893.8L704.5 891.0ZM706.6 896.9L699.4 899.8L701.4 905.7L708.6 902.9ZM710.7 908.9L703.5 911.7L705.5 917.6L712.7 914.8ZM714.8 920.8L707.6 923.6L709.6 929.5L716.8 926.7ZM718.9 932.7L711.7 935.5L713.7 941.4L720.9 938.6ZM723.0 944.6L715.8 947.4L717.8 953.3L725.0 950.5ZM727.1 956.5L719.9 959.3L721.9 965.3L729.1 962.4ZM731.2 968.4L724.0 971.2L726.0 977.2L733.2 974.3ZM735.3 980.3L728.1 983.1L730.1 989.1L737.3 986.3ZM739.4 992.2L732.2 995.0L734.2 1001.0L741.4 998.2ZM743.5 1004.1L736.3 1006.9L738.3 1012.9L745.5 1010.1ZM677.0 850.4L669.8 853.3L671.9 859.2L679.0 856.4ZM681.1 862.3L673.9 865.2L676.0 871.1L683.1 868.3ZM685.2 874.3L678.0 877.1L680.1 883.0L687.2 880.2ZM689.3 886.2L682.1 889.0L684.2 894.9L691.3 892.1ZM693.4 898.1L686.2 900.9L688.3 906.8L695.4 904.0ZM697.5 910.0L690.3 912.8L692.4 918.7L699.5 915.9ZM701.6 921.9L694.4 924.7L696.4 930.7L703.6 927.8ZM705.7 933.8L698.5 936.6L700.5 942.6L707.7 939.7ZM709.8 945.7L702.6 948.5L704.6 954.5L711.8 951.7ZM713.9 957.6L706.7 960.4L708.7 966.4L715.9 963.6ZM718.0 969.5L710.8 972.3L712.8 978.3L720.0 975.5ZM722.1 981.4L714.9 984.2L716.9 990.2L724.1 987.4ZM726.2 993.3L719.0 996.1L721.0 1002.1L728.2 999.3ZM730.3 1005.2L723.1 1008.1L725.1 1014.0L732.3 1011.2ZM734.4 1017.1L727.2 1020.0L729.2 1025.9L736.4 1023.1ZM666.3 858.7L659.1 861.5L661.1 867.5L668.3 864.7ZM670.4 870.6L663.2 873.4L665.2 879.4L672.4 876.6ZM674.4 882.5L667.3 885.3L669.3 891.3L676.5 888.5ZM678.5 894.4L671.4 897.2L673.4 903.2L680.6 900.4ZM682.6 906.3L675.5 909.2L677.5 915.1L684.7 912.3ZM686.7 918.2L679.6 921.1L681.6 927.0L688.8 924.2ZM690.8 930.2L683.7 933.0L685.7 938.9L692.9 936.1ZM694.9 942.1L687.8 944.9L689.8 950.8L697.0 948.0ZM699.0 954.0L691.9 956.8L693.9 962.7L701.1 959.9ZM703.1 965.9L696.0 968.7L698.0 974.6L705.2 971.8ZM707.2 977.8L700.1 980.6L702.1 986.6L709.3 983.7ZM711.3 989.7L704.2 992.5L706.2 998.5L713.4 995.6ZM715.4 1001.6L708.3 1004.4L710.3 1010.4L717.5 1007.6ZM719.5 1013.5L712.4 1016.3L714.4 1022.3L721.6 1019.5Z" fill="#a9a499"/><path d="M705.6 851.6L696.5 855.2M709.7 863.5L700.6 867.1M713.8 875.4L704.7 879.0M717.9 887.3L708.8 890.9M722.0 899.3L712.9 902.8M726.1 911.2L717.0 914.7M730.2 923.1L721.1 926.6M734.3 935.0L725.2 938.5M738.4 946.9L729.3 950.5M742.5 958.8L733.4 962.4M746.6 970.7L737.5 974.3M750.7 982.6L741.6 986.2M754.8 994.5L745.7 998.1M758.9 1006.4L749.8 1010.0M694.9 859.9L685.8 863.5M699.0 871.8L689.9 875.4M703.1 883.7L694.0 887.3M707.2 895.6L698.1 899.2M711.3 907.5L702.2 911.1M715.4 919.4L706.3 923.0M719.5 931.3L710.4 934.9M723.6 943.2L714.5 946.8M727.7 955.2L718.6 958.7M731.8 967.1L722.7 970.6M735.9 979.0L726.8 982.5M740.0 990.9L730.9 994.4M744.1 1002.8L735.0 1006.4M748.2 1014.7L739.1 1018.3M681.7 861.0L672.6 864.6M685.8 872.9L676.7 876.5M689.9 884.8L680.8 888.4M694.0 896.7L684.9 900.3M698.1 908.6L689.0 912.2M702.2 920.6L693.1 924.1M706.3 932.5L697.2 936.0M710.4 944.4L701.3 947.9M714.5 956.3L705.4 959.8M718.6 968.2L709.5 971.8M722.7 980.1L713.6 983.7M726.8 992.0L717.7 995.6M730.9 1003.9L721.8 1007.5M735.0 1015.8L725.9 1019.4M671.0 869.3L661.9 872.9M675.1 881.2L666.0 884.8M679.2 893.1L670.1 896.7M683.3 905.0L674.2 908.6M687.4 916.9L678.3 920.5M691.5 928.8L682.4 932.4M695.6 940.7L686.5 944.3M699.7 952.6L690.6 956.2M703.8 964.5L694.7 968.1M707.9 976.5L698.8 980.0M712.0 988.4L702.9 991.9M716.1 1000.3L707.0 1003.8M720.2 1012.2L711.1 1015.7M724.3 1024.1L715.2 1027.7" stroke="#24221f" stroke-width="0.9" fill="none"/>
<path d="M765.9 1026.5L758.4 1029.4L773.9 1074.3L781.4 1071.4ZM756.0 1030.3L748.5 1033.2L764.1 1078.1L771.5 1075.3ZM746.1 1034.1L738.7 1037.0L754.2 1082.0L761.7 1079.1ZM736.3 1037.9L728.8 1040.8L744.3 1085.8L751.8 1082.9ZM726.4 1041.7L718.9 1044.6L734.5 1089.6L742.0 1086.7Z" fill="#716d65"/><path d="M765.2 1027.1L759.3 1029.4L760.8 1033.9L766.8 1031.7ZM768.3 1036.2L762.4 1038.5L764.0 1043.1L769.9 1040.8ZM771.5 1045.4L765.6 1047.7L767.2 1052.3L773.1 1050.0ZM774.7 1054.6L768.8 1056.9L770.4 1061.5L776.3 1059.2ZM777.9 1063.8L771.9 1066.1L773.5 1070.6L779.4 1068.4ZM756.3 1033.6L750.3 1035.9L751.9 1040.5L757.8 1038.2ZM759.4 1042.8L753.5 1045.1L755.1 1049.7L761.0 1047.4ZM762.6 1052.0L756.7 1054.3L758.3 1058.8L764.2 1056.6ZM765.8 1061.2L759.9 1063.4L761.4 1068.0L767.4 1065.7ZM768.9 1070.3L763.0 1072.6L764.6 1077.2L770.5 1074.9ZM745.4 1034.7L739.5 1037.0L741.1 1041.6L747.0 1039.3ZM748.6 1043.9L742.7 1046.1L744.3 1050.7L750.2 1048.4ZM751.8 1053.0L745.9 1055.3L747.5 1059.9L753.4 1057.6ZM755.0 1062.2L749.1 1064.5L750.6 1069.1L756.6 1066.8ZM758.1 1071.4L752.2 1073.7L753.8 1078.3L759.7 1076.0ZM736.5 1041.2L730.6 1043.5L732.2 1048.1L738.1 1045.8ZM739.7 1050.4L733.8 1052.7L735.4 1057.3L741.3 1055.0ZM742.9 1059.6L737.0 1061.9L738.6 1066.5L744.5 1064.2ZM746.1 1068.8L740.1 1071.0L741.7 1075.6L747.6 1073.4ZM749.2 1077.9L743.3 1080.2L744.9 1084.8L750.8 1082.5ZM725.7 1042.3L719.8 1044.6L721.4 1049.2L727.3 1046.9ZM728.9 1051.5L723.0 1053.8L724.6 1058.3L730.5 1056.1ZM732.1 1060.6L726.2 1062.9L727.7 1067.5L733.7 1065.2ZM735.3 1069.8L729.3 1072.1L730.9 1076.7L736.8 1074.4ZM738.4 1079.0L732.5 1081.3L734.1 1085.9L740.0 1083.6Z" fill="#a9a499"/><path d="M768.9 1035.2L761.4 1038.1M772.0 1044.4L764.6 1047.3M775.2 1053.6L767.7 1056.4M778.4 1062.7L770.9 1065.6M760.0 1041.8L752.5 1044.7M763.1 1050.9L755.6 1053.8M766.3 1060.1L758.8 1063.0M769.5 1069.3L762.0 1072.2M749.2 1042.8L741.7 1045.7M752.3 1052.0L744.8 1054.9M755.5 1061.2L748.0 1064.1M758.7 1070.3L751.2 1073.2M740.3 1049.4L732.8 1052.3M743.4 1058.6L735.9 1061.4M746.6 1067.7L739.1 1070.6M749.8 1076.9L742.3 1079.8M729.4 1050.4L721.9 1053.3M732.6 1059.6L725.1 1062.5M735.8 1068.8L728.3 1071.7M739.0 1078.0L731.5 1080.8" stroke="#24221f" stroke-width="0.9" fill="none"/>
<path d="M757.3 829.2L808.6 807.7L811.0 813.3L826.9 804.8L829.3 819.4L769.0 841.4L843.9 1047.5L840.8 1054.9L841.5 1065.8L757.3 840.9Z" fill="#4c4a46" stroke="#151515" stroke-width="0.9" stroke-linejoin="round" />
<path d="M757.3 829.2L808.6 807.7L811.0 814.0L765.9 832.1Z" fill="#a9a499" stroke="#151515" stroke-width="0.9" stroke-linejoin="round" />
<path d="M811.0 811.6L826.9 804.3L828.6 809.6L813.0 817.4Z" fill="#a9a499" stroke="#151515" stroke-width="0.9" stroke-linejoin="round" />
<path d="M757.3 829.2L765.9 832.1L843.9 1047.5L840.8 1054.9Z" fill="#a9a499" stroke="#151515" stroke-width="0.9" stroke-linejoin="round" />
<path d="M801.7 934.6L847.1 917.5L848.8 922.4L804.9 940.2Z" fill="#a9a499" stroke="#151515" stroke-width="0.9" stroke-linejoin="round" />
<path d="M804.9 940.2L848.8 922.4L850.0 934.1L808.6 949.2Z" fill="#4c4a46" stroke="#151515" stroke-width="0.9" stroke-linejoin="round" />
<path d="M840.8 1054.9L911.0 1030.5L911.5 1041.4L841.5 1065.8Z" fill="#4c4a46" stroke="#151515" stroke-width="0.9" stroke-linejoin="round" />
<path d="M843.9 1047.5L892.7 1029.7L895.2 1036.6L840.8 1054.9Z" fill="#a9a499" stroke="#151515" stroke-width="0.9" stroke-linejoin="round" />
<path d="M894.0 1031.2L909.8 1024.9L911.5 1030.5L895.9 1037.8Z" fill="#a9a499" stroke="#151515" stroke-width="0.9" stroke-linejoin="round" />
<path d="M1430.2 763.5L1449.4 755.7L1456.0 755.7L1458.4 758.7L1491.9 825.9L1490.7 830.7L1479.9 835.4L1477.5 833.0L1466.7 834.8L1464.3 832.4L1430.8 767.1Z" fill="#222221" stroke="#0a0a0a" stroke-width="0.9" stroke-linejoin="round" />
<path d="M1431.4 764.1L1450.0 756.6L1485.3 824.7L1466.1 831.8Z" fill="#2b2b2a" />
<path d="M1436.5 773.4L1455.7 765.7" fill="none" stroke="#050505" stroke-width="1" stroke-linecap="round" stroke-linejoin="round" />
<path d="M1442.8 785.1L1461.4 777.3" fill="none" stroke="#050505" stroke-width="1" stroke-linecap="round" stroke-linejoin="round" />
<path d="M1448.8 796.8L1467.3 789.3" fill="none" stroke="#050505" stroke-width="1" stroke-linecap="round" stroke-linejoin="round" />
<path d="M1454.8 808.5L1473.7 800.9" fill="none" stroke="#050505" stroke-width="1" stroke-linecap="round" stroke-linejoin="round" />
<path d="M1460.8 820.2L1479.9 812.7" fill="none" stroke="#050505" stroke-width="1" stroke-linecap="round" stroke-linejoin="round" />
<path d="M1450.0 756.6L1485.3 824.7" fill="none" stroke="#050505" stroke-width="0.8" stroke-linecap="round" stroke-linejoin="round" />
<path d="M1550.7 719.8L1554.2 718.2L1559.0 728.8L1563.8 736.0L1561.2 738.1L1556.0 730.0Z" fill="#8a867e" stroke="#151515" stroke-width="0.9" stroke-linejoin="round" />
<path d="M1582.4 778.5L1586.0 777.3L1595.6 794.7L1592.6 797.1L1587.2 786.3Z" fill="#8a867e" stroke="#151515" stroke-width="0.9" stroke-linejoin="round" />
<path d="M1499.1 734.2L1547.1 717.4L1549.5 719.2L1587.2 791.1L1586.6 794.7L1540.5 811.5L1538.1 809.1ZM1532.1 746.1L1544.1 742.2L1570.4 782.7L1554.2 788.7Z" fill="#97928a" fill-rule="evenodd" stroke="#151515" stroke-width="0.9" stroke-linejoin="round" />
<path d="M1538.1 809.1L1540.5 811.5L1586.6 794.7L1586.8 791.7Z" fill="#57544e" stroke="#151515" stroke-width="0.9" stroke-linejoin="round" />
<path d="M1514.1 740.8L1549.5 728.8L1580.0 788.1L1544.1 796.5ZM1532.1 746.1L1544.1 742.2L1570.4 782.7L1554.2 788.7Z" fill="#86827a" fill-rule="evenodd" stroke="#151515" stroke-width="0.9" stroke-linejoin="round" />
<path d="M1521.3 741.4L1547.1 732.4L1575.2 786.5L1548.3 794.7ZM1532.1 746.1L1544.1 742.2L1570.4 782.7L1554.2 788.7Z" fill="#a7a195" fill-rule="evenodd" stroke="#151515" stroke-width="0.9" stroke-linejoin="round" />
<path d="M1515.9 741.4L1521.3 741.4L1548.3 794.7L1544.1 796.5Z" fill="#a9ada9" stroke="#151515" stroke-width="0.9" stroke-linejoin="round" />
<path d="M1528.5 739.6L1545.3 734.8L1547.1 741.4L1544.1 742.2L1532.1 746.1Z" fill="#54514b" stroke="#151515" stroke-width="0.9" stroke-linejoin="round" />
<path d="M1577.8 713.2L1580.8 707.8L1667.1 680.8L1711.4 758.1L1710.2 761.1L1622.7 791.1L1619.7 791.7Z" fill="#89857c" stroke="#151515" stroke-width="0.9" stroke-linejoin="round" />
<path d="M1577.8 713.2L1580.8 707.8L1623.3 788.1L1619.7 791.7Z" fill="#55524d" stroke="#151515" stroke-width="0.9" stroke-linejoin="round" />
<path d="M1619.7 791.7L1623.3 788.1L1711.4 758.1L1710.2 761.1L1622.7 791.1Z" fill="#5d5a54" stroke="#151515" stroke-width="0.9" stroke-linejoin="round" />
<path d="M1588.0 706.0L1628.7 781.5" fill="none" stroke="#151515" stroke-width="0.9" stroke-linecap="round" stroke-linejoin="round" />
<path d="M1589.8 705.4L1631.1 780.3L1682.1 764.7" fill="none" stroke="#151515" stroke-width="0.9" stroke-linecap="round" stroke-linejoin="round" />
<path d="M1597.0 708.4L1638.3 688.0L1641.9 688.6L1645.5 699.4L1649.1 698.8L1652.7 706.6L1636.5 712.6L1635.3 710.2L1606.6 719.1Z" fill="#8f8b82" stroke="#151515" stroke-width="0.9" stroke-linejoin="round" />
<path d="M1597.6 709.0L1637.1 694.6L1638.9 698.2L1601.2 712.0Z" fill="#5a5751" stroke="#151515" stroke-width="0.9" stroke-linejoin="round" />
<path d="M1633.5 767.1L1659.3 755.7L1660.5 753.3L1676.1 747.9L1683.3 764.7L1681.5 768.3L1629.9 783.9L1627.5 777.9Z" fill="#8f8b82" stroke="#151515" stroke-width="0.9" stroke-linejoin="round" />
<path d="M1634.7 767.7L1674.3 756.3L1676.7 763.5L1636.5 770.7Z" fill="#5a5751" stroke="#151515" stroke-width="0.9" stroke-linejoin="round" />
<path d="M1625.1 733.5L1632.3 731.1L1638.9 743.1L1631.7 746.7Z" fill="#96928a" stroke="#151515" stroke-width="0.9" stroke-linejoin="round" />
<circle cx="1671.3" cy="698.8" r="1.3" fill="#1a1a1a"/>
<circle cx="1695.9" cy="742.8" r="1.3" fill="#1a1a1a"/>
<circle cx="1592.5" cy="723.3" r="1.3" fill="#1a1a1a"/>
<circle cx="1616.7" cy="768.0" r="1.3" fill="#1a1a1a"/>
<path d="M1765.4 716.7L1769.0 711.4L1776.2 708.4L1778.6 712.0L1784.6 721.5L1783.4 726.3L1775.0 731.1L1772.6 729.9Z" fill="#262625" stroke="#0a0a0a" stroke-width="0.9" stroke-linejoin="round" />
<path d="M1769.0 711.4L1776.2 708.4L1778.6 712.0L1771.4 715.5Z" fill="#3a3a38" />
<ellipse cx="1866" cy="222" rx="32" ry="18" fill="#000" fill-opacity="0.10" filter="url(#blur6)"/>
<path d="M1832.7 177.9L1878.2 165.0L1898.2 204.9L1847.4 220.3Z" fill="#f1f1f1" fill-opacity="0.95"/>
<path d="M1847.4 220.3L1898.2 204.9L1893.7 223.5L1851.9 239.5Z" fill="#e9e9e9" fill-opacity="0.95"/>
<path d="M1832.7 177.9L1847.4 220.3L1851.9 239.5L1837.1 202.9Z" fill="#dedede" fill-opacity="0.95"/>
<path d="M1832.7 177.9L1878.2 165.0L1898.2 204.9L1847.4 220.3ZM1847.4 220.3L1851.9 239.5L1893.7 223.5L1898.2 204.9M1832.7 177.9L1837.1 202.9L1851.9 239.5" fill="none" stroke="#555" stroke-width="0.800" stroke-dasharray="4 2.500"/>
<path d="M1831.4 173.6L1837.1 202.9" stroke="#4a4af0" stroke-width="1.800" fill="none"/>
<path d="M1837.1 202.9L1853.8 249.2" stroke="#f08080" stroke-width="1.600" fill="none" opacity="0.850"/>
<path d="M1889.2 184.9L1890.7 181.4" stroke="#7be07b" stroke-width="1.500" fill="none"/>
<text x="1829.4" y="167.6" font-size="10.500" fill="#5a5af5" text-anchor="middle" dominant-baseline="middle">Z</text>
<text x="1855.1" y="254.0" font-size="10.500" fill="#f07070" text-anchor="middle" dominant-baseline="middle">X</text>
<text transform="translate(1864.1 193.3) rotate(70) skewX(-12)" font-size="27" fill="#8a8d92" text-anchor="middle" dominant-baseline="central">上</text>
<text transform="translate(1873.1 224.1) rotate(160) scale(1 0.450) skewX(-20)" font-size="18" fill="#8a8d92" text-anchor="middle" dominant-baseline="central">右</text>
</g>
<g id="leftstrip">
<rect x="0.0" y="0.0" width="8.0" height="1168.0" fill="#f6f6f6" />
<rect x="0.0" y="0.0" width="8.0" height="41.0" fill="#dfe3ec" />
<path d="M0 40H5Q8 40 8 43V86H0Z" fill="#ffffff"/>
<circle cx="-7.500" cy="62" r="9.300" fill="#d4e0fb"/>
<rect x="0.0" y="86.0" width="8.0" height="0.8" fill="#dcdcdc" />
<path d="M0 98V95.500L2.300 92.800L5 98Z" fill="#555"/>
<path d="M0 105H2.500Q4.600 105 4.600 107.500V453Q4.600 455.500 2.500 455.500H0Z" fill="#5e5e5e"/>
<path d="M0 1028H5L1 1033H0Z" fill="#555"/>
<rect x="0.0" y="1040.0" width="7.8" height="40.0" fill="#121212" />
<rect x="0.0" y="1080.0" width="7.8" height="88.0" fill="#000" />
<text x="-3.0" y="1073.0" font-size="11" fill="#fff" >5</text>
</g>
<g id="titlebar">
<rect x="8.0" y="0.0" width="1920.0" height="23.0" fill="#ffffff" />
<rect x="11.500" y="3.500" width="14" height="15" rx="2.500" fill="#ff6b00"/><path d="M11.500 14H25.500V16Q25.500 18.500 23 18.500H14Q11.500 18.500 11.500 16Z" fill="#a84300"/>
<text x="16.0" y="12.0" font-size="8.5" fill="#fff" font-weight="bold" >F</text>
<text x="31.3" y="15.7" font-size="12.3" fill="#000" textLength="430.7" lengthAdjust="spacingAndGlyphs" >MZ-1200_open2 v1 (Team hub - g catsin) - Autodesk Fusion 個人用(商用利用不可)</text>
<path d="M1807 10.5H1817" stroke="#000" stroke-width="1"/>
<path d="M1852.5 7.5H1859.5V14.5H1852.5ZM1854.5 7.5V5.5H1861.5V12.5H1859.5" stroke="#000" stroke-width="1" fill="none"/>
<path d="M1898 5.5L1908 15.5M1908 5.5L1898 15.5" stroke="#000" stroke-width="1.1"/>
</g>
<g id="tabbar">
<rect x="8.0" y="23.0" width="1920.0" height="32.0" fill="#cccccc" />
<path d="M201 55V31Q201 27 205 27H236Q240 27 240 31V55Z" fill="#bababa"/>
<path d="M244 55V31Q244 27 248 27H1674Q1678 27 1678 31V55Z" fill="#f2f2f2"/>
<path d="M1682 55V30Q1682 27 1685 27H1707Q1710 27 1710 30V55Z" fill="#b7b7b7"/>
<rect x="17.0" y="32.0" width="4.0" height="4.0" fill="#666" rx="0.6"/>
<rect x="17.0" y="37.0" width="4.0" height="4.0" fill="#666" rx="0.6"/>
<rect x="17.0" y="42.0" width="4.0" height="4.0" fill="#666" rx="0.6"/>
<rect x="22.0" y="32.0" width="4.0" height="4.0" fill="#666" rx="0.6"/>
<rect x="22.0" y="37.0" width="4.0" height="4.0" fill="#666" rx="0.6"/>
<rect x="22.0" y="42.0" width="4.0" height="4.0" fill="#666" rx="0.6"/>
<rect x="27.0" y="32.0" width="4.0" height="4.0" fill="#666" rx="0.6"/>
<rect x="27.0" y="37.0" width="4.0" height="4.0" fill="#666" rx="0.6"/>
<rect x="27.0" y="42.0" width="4.0" height="4.0" fill="#666" rx="0.6"/>
<path d="M50 31.5H58.5L63 36V46.5H50Z" fill="#666"/><path d="M58.5 31.5V36H63Z" fill="#ccc"/><path d="M59.3 31.8L62.7 35.2H59.3Z" fill="#666"/>
<path d="M69.5 36.5H76.5L73 41Z" fill="#666"/>
<path d="M95 32H108L109 33V46H96L95 45Z" fill="#9a9a9a"/><rect x="98" y="32" width="7" height="4.5" fill="#ccc"/><rect x="98.5" y="40" width="7" height="6" fill="#ccc"/><rect x="100.8" y="42" width="2.6" height="4" fill="#9a9a9a"/>
<path d="M133.5 34L129 38.5L133.5 43" stroke="#555" stroke-width="1.8" fill="none" stroke-linecap="round" stroke-linejoin="round"/><path d="M129.5 38.5H135Q140 38.5 140 44" stroke="#555" stroke-width="1.8" fill="none" stroke-linecap="round"/>
<path d="M148 36.5H155L151.5 41Z" fill="#666"/>
<path d="M175.5 34L180 38.5L175.5 43" stroke="#9a9a9a" stroke-width="1.8" fill="none" stroke-linecap="round" stroke-linejoin="round"/><path d="M179.5 38.5H174Q169 38.5 169 44" stroke="#9a9a9a" stroke-width="1.8" fill="none" stroke-linecap="round"/>
<path d="M187 36.5H194L190.5 41Z" fill="#a5a5a5"/>
<path d="M213 43L221.5 35.5L225 38.5V36.5H227V40.3L230 43H227.8V48.5H223V45H220.5V48.5H215.2V43Z" fill="#7a7a7a"/>
<path d="M895.5 41.5L899 45L906 37" stroke="#666" stroke-width="1.8" fill="none"/>
<text x="913.0" y="45.6" font-size="11.5" fill="#333" textLength="105.0" lengthAdjust="spacingAndGlyphs" >MZ-1200_open2 v1</text>
<path d="M1663 37L1671 45M1671 37L1663 45" stroke="#666" stroke-width="1.2"/>
<path d="M1689.5 40.5H1702.500M1696 34V47" stroke="#777" stroke-width="2.4"/>
<circle cx="1730" cy="38.7" r="8" fill="#1e88e5"/><path d="M1730.6 32.8L1734.6 37.6H1732.2Q1732.2 42 1728.4 45Q1729.8 41.5 1729.2 37.6H1726.6Z" fill="#fff"/>
<circle cx="1762.8" cy="38.9" r="6.600" fill="none" stroke="#666" stroke-width="2"/><path d="M1759 35.500L1766.500 32.500L1768 39L1763 43.500L1758.500 41Z" fill="#666"/><path d="M1765.500 30.500L1769.500 34.500" stroke="#ccc" stroke-width="1.800"/><path d="M1758.500 46.500L1755.800 42.500" stroke="#ccc" stroke-width="1.800"/>
<circle cx="1795.9" cy="38.9" r="7.6" fill="none" stroke="#666" stroke-width="1"/><circle cx="1795.9" cy="38.9" r="6" fill="#666"/><path d="M1795.9 34.5V39.2H1799.8" stroke="#ccc" stroke-width="1.3" fill="none"/>
<path d="M1828.8 31.5Q1832.8 32 1833 38Q1833.2 41.5 1835.5 43.5H1822.100Q1824.400 41.500 1824.600 38Q1824.800 32 1828.800 31.500Z" fill="#666"/><path d="M1827 45H1830.600L1828.800 46.800Z" fill="#666"/><circle cx="1833.500" cy="35" r="2.900" fill="#1a9be0"/>
<circle cx="1862" cy="38.9" r="8" fill="#666"/>
<text x="1862.0" y="43.8" font-size="13.5" fill="#ccc" text-anchor="middle" font-weight="bold" >?</text>
<circle cx="1903" cy="38.9" r="12" fill="url(#avg)"/><path d="M1903 29.500Q1908 29.500 1907.700 35Q1907.500 38.500 1905.800 40.200Q1906 42.500 1909.500 43.500Q1912.500 44.500 1912.800 46Q1909 51 1903 51Q1897 51 1893.200 46Q1893.500 44.500 1896.500 43.500Q1900 42.500 1900.200 40.200Q1898.500 38.500 1898.300 35Q1898 29.500 1903 29.500Z" fill="#50607a"/>
</g>
<g id="toolbar">
<rect x="8.0" y="55.0" width="1920.0" height="81.0" fill="#f2f2f2" />
<rect x="8.0" y="136.0" width="1920.0" height="1.0" fill="#e2e2e2" />
<rect x="20.5" y="66.500" width="109" height="60" rx="4" fill="#f4f4f4" stroke="#d4d4d4" stroke-width="1.3"/>
<text x="53.0" y="99.3" font-size="10.5" fill="#222" textLength="34.0" lengthAdjust="spacingAndGlyphs" >デザイン</text>
<path d="M92.500 94.500H98.500L95.500 98.500Z" fill="#333"/>
<text x="158.7" y="71.0" font-size="10.5" fill="#0696d7" textLength="31.1" lengthAdjust="spacingAndGlyphs" >ソリッド</text>
<text x="236.5" y="71.0" font-size="10.5" fill="#333" textLength="38.5" lengthAdjust="spacingAndGlyphs" >サーフェス</text>
<text x="319.2" y="71.0" font-size="10.5" fill="#333" textLength="30.5" lengthAdjust="spacingAndGlyphs" >メッシュ</text>
<text x="397.2" y="71.0" font-size="10.5" fill="#333" textLength="30.8" lengthAdjust="spacingAndGlyphs" >フォーム</text>
<text x="475.6" y="71.0" font-size="10.5" fill="#333" textLength="51.1" lengthAdjust="spacingAndGlyphs" >シート メタル</text>
<text x="573.7" y="71.0" font-size="10.5" fill="#333" textLength="45.5" lengthAdjust="spacingAndGlyphs" >プラスチック</text>
<text x="666.1" y="71.0" font-size="10.5" fill="#333" textLength="52.8" lengthAdjust="spacingAndGlyphs" >ユーティリティ</text>
<text x="764.7" y="71.0" font-size="10.5" fill="#333" textLength="21.4" lengthAdjust="spacingAndGlyphs" >管理</text>
<rect x="146.5" y="75.5" width="56.0" height="3.0" fill="#0696d7" rx="1"/>
<rect x="358.0" y="82.0" width="1.5" height="50.0" fill="#dcdcdc" />
<rect x="627.3" y="82.0" width="1.5" height="50.0" fill="#dcdcdc" />
<rect x="767.2" y="82.0" width="1.5" height="50.0" fill="#dcdcdc" />
<rect x="891.0" y="82.0" width="1.5" height="50.0" fill="#dcdcdc" />
<rect x="950.2" y="82.0" width="1.5" height="50.0" fill="#dcdcdc" />
<rect x="1009.3" y="82.0" width="1.5" height="50.0" fill="#dcdcdc" />
<rect x="1106.1" y="82.0" width="1.5" height="50.0" fill="#dcdcdc" />
<text x="229.6" y="130.5" font-size="10.5" fill="#333" textLength="21.2" lengthAdjust="spacingAndGlyphs" >作成</text>
<path d="M254.3 124.500H259.8L257.1 128Z" fill="#222"/>
<text x="476.3" y="130.5" font-size="10.5" fill="#333" textLength="21.0" lengthAdjust="spacingAndGlyphs" >修正</text>
<path d="M500.8 124.500H506.3L503.6 128Z" fill="#222"/>
<text x="672.7" y="130.5" font-size="10.5" fill="#333" textLength="39.9" lengthAdjust="spacingAndGlyphs" >アセンブリ</text>
<path d="M716.1 124.500H721.6L718.9 128Z" fill="#222"/>
<text x="782.6" y="130.5" font-size="10.5" fill="#333" textLength="85.4" lengthAdjust="spacingAndGlyphs" >コンフィギュレーション</text>
<path d="M871.5 124.500H877.0L874.2 128Z" fill="#222"/>
<text x="907.1" y="130.5" font-size="10.5" fill="#333" textLength="21.4" lengthAdjust="spacingAndGlyphs" >構築</text>
<path d="M932.0 124.500H937.5L934.8 128Z" fill="#222"/>
<text x="965.6" y="130.5" font-size="10.5" fill="#333" textLength="21.0" lengthAdjust="spacingAndGlyphs" >検査</text>
<path d="M990.1 124.500H995.6L992.9 128Z" fill="#222"/>
<text x="1041.5" y="130.5" font-size="10.5" fill="#333" textLength="20.7" lengthAdjust="spacingAndGlyphs" >挿入</text>
<path d="M1065.7 124.500H1071.2L1068.5 128Z" fill="#222"/>
<text x="1121.5" y="130.5" font-size="10.5" fill="#333" textLength="20.5" lengthAdjust="spacingAndGlyphs" >選択</text>
<path d="M1145.5 124.500H1151.0L1148.2 128Z" fill="#222"/>
<g stroke="#555" stroke-width="1" fill="none"><path d="M147 83.500H172.500M146.500 85V109M147 110.500H163M174 85V100" stroke-dasharray="5 2.500"/><path d="M153.500 90.500H165M153 92V103" stroke-dasharray="4 2"/><path d="M167 91Q166 103 154.500 104.500"/></g>
<rect x="145" y="82" width="3" height="3" fill="#444"/>
<rect x="172" y="82" width="3" height="3" fill="#444"/>
<rect x="145" y="108.5" width="3" height="3" fill="#444"/>
<rect x="152" y="89" width="3" height="3" fill="#444"/>
<rect x="164.5" y="89" width="3" height="3" fill="#444"/>
<rect x="152" y="102.5" width="3" height="3" fill="#444"/>
<path d="M163 106.500H176.800M169.900 99.800V113.500" stroke="#1fa64c" stroke-width="3.600"/>
<path d="M189 107.500L194 101.500H213V105.500L208 113H189Z" fill="#bdbdbd"/>
<path d="M189 88.500H208V107.500H189Z" fill="#6ab0e6"/><path d="M189 88.500L195 82H213L208 88.500Z" fill="#8cccf8"/><path d="M208 88.500L213 82V101.500L208 107.500Z" fill="#4a92cc"/>
<path d="M216.500 108V86" stroke="#222" stroke-width="1.100"/><path d="M214 87.500L216.500 83L219 87.500Z" fill="#222"/>
<path d="M231 99Q247 84 263 97L257 104Q247 96 238 106Z" fill="#8cccf8"/><path d="M231 99L238 106V111L231 104Z" fill="#4a92cc"/><path d="M238 106Q247 96 257 104V110Q247 102 238 111Z" fill="#6ab0e6"/><path d="M257 104L263 97V104L257 110Z" fill="#fff" stroke="#555" stroke-width="0.900"/>
<path d="M233 89Q247 80 261 89" stroke="#222" stroke-width="1" fill="none"/><path d="M231.500 90.500L236.500 86.500L237 91Z" fill="#222"/>
<path d="M274.500 90L280 82.500H305.500V105.500L300 113H274.500Z" fill="#dcdcdc" stroke="#5a5a5a" stroke-width="0.900"/><path d="M300 90L305.500 82.500V105.500L300 113Z" fill="#bdbdbd" stroke="#5a5a5a" stroke-width="0.900"/><path d="M274.500 90H300V113" fill="none" stroke="#5a5a5a" stroke-width="0.900"/>
<circle cx="287.500" cy="101" r="8" fill="#f4f4f4" stroke="#555" stroke-width="0.900"/><path d="M283 96Q281 101 284.500 105.500Q290 109 294.500 104Q287 104 286 95.500Z" fill="#6ab0e6"/><circle cx="287.500" cy="101" r="6.300" fill="none" stroke="#555" stroke-width="0.700"/>
<path d="M324 87.500H338M320.500 91V105M324 108.500H338" stroke="#555" stroke-width="1"/>
<rect x="317.500" y="84.500" width="6.500" height="6.500" fill="#fff" stroke="#555" stroke-width="0.900"/>
<rect x="338" y="84" width="7" height="7" fill="#6ab0e6"/>
<rect x="317" y="105" width="7" height="7" fill="#6ab0e6"/>
<rect x="338" y="105" width="7" height="7" fill="#6ab0e6"/>
<path d="M372.500 89L378 82H383V113H372.500Z" fill="#f0f0f0" stroke="#5a5a5a" stroke-width="0.900"/>
<path d="M379 89H388V113H379Z" fill="#6ab0e6"/><path d="M379 89L384 82H394L388 89Z" fill="#8cccf8"/><path d="M388 89L394 82V106L388 113Z" fill="#4a92cc"/>
<path d="M391 96.500H399" stroke="#222" stroke-width="1.100"/><path d="M397 94L401 96.500L397 99Z" fill="#222"/><path d="M391.500 95.500V97.500" stroke="#fff" stroke-width="1"/>
<path d="M414.500 90L421 82.500H432Q444 84 446 96V105L438 113H414.500Z" fill="#dcdcdc" stroke="#5a5a5a" stroke-width="0.900"/>
<path d="M438 113L446 105V96L438 103Z" fill="#bdbdbd" stroke="#5a5a5a" stroke-width="0.900"/>
<path d="M427 86L432 82.500Q444 84 446 96L438 103Q437 89 427 86Z" fill="#6ab0e6"/>
<path d="M457 90L463 82.500H488.500V105.500L482.500 113H457Z" fill="#f0f0f0" stroke="#5a5a5a" stroke-width="0.900"/><path d="M482.500 90L488.500 82.500V105.500L482.500 113Z" fill="#bdbdbd" stroke="#5a5a5a" stroke-width="0.900"/><path d="M457 90H482.500V113" fill="none" stroke="#5a5a5a" stroke-width="0.900"/>
<rect x="460.500" y="93.500" width="17.500" height="16.500" fill="#dcdcdc"/><path d="M461 94H468.500V102.500H477.500V109.500H461Z" fill="#4a92cc"/><path d="M461 109.500L468.500 102.500H477.500V109.500Z" fill="#8cccf8"/>
<path d="M510 89H526V100H510Z" fill="#6ab0e6"/><path d="M510 89L515 82.500H532L526 89Z" fill="#8cccf8"/><path d="M526 89L532 82.500V94L526 100Z" fill="#4a92cc"/>
<path d="M499.500 98H516V113H499.500Z" fill="#6ab0e6"/><path d="M499.500 98L504.500 92H510V100H521L516 98Z" fill="#8cccf8"/><path d="M516 98H526V100L532 94V103.500L521 113H516Z" fill="#6ab0e6"/><path d="M516 103H521.500V113H516Z" fill="#4a92cc"/>
<path d="M545 89H569V97H545Z" fill="#6ab0e6"/><path d="M545 89L550 82.500H573L569 89Z" fill="#8cccf8"/><path d="M569 89L573 82.500V92L569 97Z" fill="#4a92cc"/>
<path d="M545 102H569V112.500H545Z" fill="#dcdcdc" stroke="#5a5a5a" stroke-width="0.800"/><path d="M569 102L573 97V107L569 112.500Z" fill="#bdbdbd" stroke="#5a5a5a" stroke-width="0.800"/>
<path d="M543 100.500H569L575 93" stroke="#1e88e5" stroke-width="1.400" fill="none"/>
<path d="M602 86V110M590 98H614" stroke="#333" stroke-width="1.600"/><path d="M598 88L602 82.500L606 88ZM598 108L602 113.500L606 108ZM592 94L586.500 98L592 102ZM612 94L617.500 98L612 102Z" fill="#333"/>
<path d="M640 101H652V113H640Z" fill="#dcdcdc" stroke="#5a5a5a" stroke-width="0.800"/><path d="M652 101H664V113H652Z" fill="#dcdcdc" stroke="#5a5a5a" stroke-width="0.800"/><path d="M652 101L656 97H668L664 101Z" fill="#f0f0f0" stroke="#5a5a5a" stroke-width="0.800"/><path d="M664 101L668 97V109L664 113Z" fill="#bdbdbd" stroke="#5a5a5a" stroke-width="0.800"/>
<path d="M640 90H652V101H640Z" fill="#6ab0e6"/><path d="M640 90L644 86H656L652 90Z" fill="#8cccf8"/><path d="M652 90L656 86V97L652 101Z" fill="#4a92cc"/>
<path d="M663.500 82L665 87L669.500 84.500L667.500 89L672 90.500L667.500 92L669.500 96.500L665 94L663.500 99L662 94L657.500 96.500L659.500 92L655 90.500L659.500 89L657.500 84.500L662 87Z" fill="#f9a11b"/>
<path d="M685.500 110V92Q686 86 691 84.500H695Q698 85 698 89V98L690 105.500Z" fill="#dcdcdc" stroke="#5a5a5a" stroke-width="0.900"/>
<path d="M691 84.500Q694 83 697 84.500Q698 86 698 89" fill="none" stroke="#5a5a5a" stroke-width="0.900"/>
<path d="M706 86.500L713 94V110.500L706 104Z" fill="#bdbdbd" stroke="#5a5a5a" stroke-width="0.900"/><path d="M700.500 95.500Q703 93.500 706 95.500V104Q703 106 700.500 104Z" fill="#dcdcdc" stroke="#5a5a5a" stroke-width="0.900"/>
<path d="M694.500 96V101.500M703.500 90V95" stroke="#1e88e5" stroke-width="1"/>
<rect x="726" y="82.500" width="6" height="6" fill="#6ab0e6" stroke="#4a7fb0" stroke-width="0.800"/><rect x="726.500" y="88.500" width="5.500" height="5.500" fill="#fff" stroke="#555" stroke-width="0.800"/><rect x="732" y="88.500" width="5.500" height="5.500" fill="#fff" stroke="#555" stroke-width="0.800"/>
<path d="M731.500 94V112M731.500 99.500H738M731.500 105.500H738M731.500 111.500H738" stroke="#777" stroke-width="0.800" fill="none"/>
<rect x="741.500" y="90.500" width="16" height="22.500" fill="#fff" stroke="#444" stroke-width="0.900"/><rect x="741.500" y="90.500" width="16" height="3" fill="#555"/><path d="M741.500 97H757.500M741.500 100.500H757.500M741.500 104H757.500M741.500 107.500H757.500M746.500 93.500V113" stroke="#444" stroke-width="0.700"/>
<g opacity="0.450"><path d="M793 88L798 82.500H812V108H793Z" fill="#e6e6e6" stroke="#cfcfcf" stroke-width="0.800"/><circle cx="817" cy="89.500" r="7.500" fill="#7db8e8"/><path d="M817 84.500L820.500 89H818.500V94.500H815.500V89H813.500Z" fill="#fff"/><path d="M810 104.500H824M810 110.500H824M815 102V107M819.500 108V113" stroke="#bbb" stroke-width="1.200"/></g>
<g opacity="0.450"><rect x="836.500" y="82.500" width="27" height="25" fill="#e8e8e8" stroke="#cfcfcf" stroke-width="0.800"/><path d="M836.500 87H863.500M836.500 92H863.500M836.500 97H863.500M836.500 102H863.500M843 87V107.500M850 87V107.500" stroke="#cfcfcf" stroke-width="0.800"/><circle cx="860" cy="89.500" r="7.500" fill="#7db8e8"/><path d="M860 84.500L863.500 89H861.500V94.500H858.500V89H856.500Z" fill="#fff"/><path d="M853 104.500H867M853 110.500H867M858 102V107M862.500 108V113" stroke="#bbb" stroke-width="1.200"/></g>
<path d="M907.500 91L915.500 82.500H923L915 91V112.500H907.500Z" fill="#dcdcdc" stroke="#5a5a5a" stroke-width="0.900"/><path d="M907.500 91H915V112.500" fill="none" stroke="#5a5a5a" stroke-width="0.900"/>
<path d="M915.500 92L925 82.500V103L915.500 112.500Z" fill="#5fc27e"/><path d="M928 93L936.500 83V102.500L928 112.500Z" fill="#e39a66"/>
<rect x="967" y="100.500" width="28" height="5.500" fill="#f5a300"/><path d="M969 100.500V103M971.500 100.500V102M974 100.500V103M976.500 100.500V102M979 100.500V103M981.500 100.500V102M984 100.500V103M986.500 100.500V102M989 100.500V103M991.500 100.500V102" stroke="#a36a00" stroke-width="0.600"/>
<path d="M967.500 90V99M994.500 90V99M969 94.500H993" stroke="#555" stroke-width="0.900"/><path d="M971.500 92.500L968.500 94.500L971.500 96.500ZM990.500 92.500L993.500 94.500L990.500 96.500Z" fill="#555"/>
<path d="M1026 93L1033 86H1051.500V104L1045 111.500H1026Z" fill="#dcdcdc" stroke="#5a5a5a" stroke-width="0.900"/><path d="M1045 93L1051.500 86V104L1045 111.500Z" fill="#bdbdbd" stroke="#5a5a5a" stroke-width="0.900"/><path d="M1026 93H1045V111.500" fill="none" stroke="#5a5a5a" stroke-width="0.900"/>
<path d="M1022 86.500H1030.500V83L1039 88.500L1030.500 94V90.500H1022Z" fill="#1e88e5"/>
<g stroke="#222" stroke-width="1.800" fill="none"><ellipse cx="1042.500" cy="108.500" rx="4.600" ry="2.800" transform="rotate(-32 1042.500 108.500)"/><ellipse cx="1048.500" cy="104.500" rx="4.600" ry="2.800" transform="rotate(-32 1048.500 104.500)"/></g>
<rect x="1066.500" y="83.500" width="28" height="28.500" fill="#8cccf8" stroke="#4a92cc" stroke-width="0.800"/><path d="M1066.500 101Q1072 92 1077 99Q1080 104 1084 101Q1088 97 1094.500 106V112H1066.500Z" fill="#4a92cc"/><circle cx="1086.500" cy="91" r="3" fill="#fdfac8"/>
<rect x="1118" y="79" width="38" height="38" fill="#0696d7"/><rect x="1121.500" y="82.500" width="27" height="20.500" fill="none" stroke="#8fe88f" stroke-width="1.200" stroke-dasharray="4.500 2.500"/>
<path d="M1142 96.500V111.500L1145.500 108.500L1148 114L1150.500 113L1148 107.500H1152.500Z" fill="#fff"/>
</g>
<g id="browser">
<rect x="13.5" y="145.500" width="297" height="23" fill="#f2f2f2" stroke="#d4d4d4"/>
<path d="M22.500 153L18.500 156L22.500 159ZM27.500 153L23.500 156L27.500 159Z" fill="#222"/>
<text x="37.0" y="160.0" font-size="10.5" fill="#555" textLength="33.0" lengthAdjust="spacingAndGlyphs" >ブラウザ</text>
<circle cx="295" cy="156" r="4" fill="#222"/><rect x="292.500" y="155.300" width="5" height="1.400" fill="#f2f2f2"/>
<rect x="17.0" y="172.0" width="5.5" height="935.0" fill="#c9c9c9" />
<rect x="17" y="173" width="5.500" height="73" rx="2.500" fill="#a9a9a9"/>
<rect x="48.0" y="174.5" width="190.5" height="19.5" fill="#f0f0f0" />
<path d="M39.5 178.5V189.5H28.5Z" fill="url(#expg)" stroke="#333" stroke-width="0.9"/>
<path d="M50.5 184.0Q59.0 174.5 67.5 184.0Q59.0 193.5 50.5 184.0Z" fill="#9c9c9c"/><circle cx="59.0" cy="184.0" r="3.3" fill="#f0f0f0"/><circle cx="59.0" cy="184.0" r="2" fill="#8a8a8a"/>
<rect x="73.0" y="176.3" width="142.0" height="15.5" fill="#9a9a9a" />
<g transform="translate(0 0)"><path d="M77.500 181L80 178H90.500V188L88 190.500H77.500Z" fill="#eef0f4" stroke="#555" stroke-width="0.900"/><path d="M77.500 181H88V190.500M88 181L90.500 178" stroke="#555" stroke-width="0.900" fill="none"/></g>
<text x="106.3" y="188.2" font-size="11" fill="#fff" textLength="98.6" lengthAdjust="spacingAndGlyphs" font-weight="bold" >MZ-1200_open2 v1</text>
<circle cx="225.600" cy="184" r="5.200" fill="#fff" stroke="#222" stroke-width="1"/><circle cx="225.600" cy="184" r="2" fill="#222"/>
<rect x="66.0" y="198.5" width="116.1" height="19.5" fill="#f0f0f0" />
<path d="M48.5 201.5L56.5 208.0L48.5 214.5Z" fill="#fafafa" stroke="#333" stroke-width="1"/>
<g transform="translate(75.500 207.5)"><circle r="4.600" fill="#666"/><g stroke="#666" stroke-width="2.600"><path d="M0 -6.800V6.800M-6.800 0H6.800M-4.800 -4.800L4.800 4.800M-4.800 4.800L4.800 -4.800"/></g><circle r="1.900" fill="#f0f0f0"/></g>
<text x="94.0" y="212.9" font-size="11" fill="#333" textLength="78.6" lengthAdjust="spacingAndGlyphs" >ドキュメントの設定</text>
<rect x="66.0" y="222.5" width="124.7" height="19.5" fill="#f0f0f0" />
<path d="M48.5 225.5L56.5 232.0L48.5 238.5Z" fill="#fafafa" stroke="#333" stroke-width="1"/>
<path d="M68.5 225.5H75.0L76.5 227.0H84.5V238.0H68.5Z" fill="#9b9b9b"/><path d="M69.0 229.2H84.0" stroke="#c8c8c8" stroke-width="0.8"/>
<text x="99.2" y="236.9" font-size="11" fill="#333" textLength="82.0" lengthAdjust="spacingAndGlyphs" >名前の付いたビュー</text>
<rect x="66.0" y="246.5" width="88.3" height="19.5" fill="#f0f0f0" />
<path d="M48.5 249.5L56.5 256.0L48.5 262.5Z" fill="#fafafa" stroke="#333" stroke-width="1"/>
<g stroke="#aaa" fill="none" stroke-width="1"><path d="M69.0 256.0Q77.0 247.5 85.0 256.0Q77.0 264.5 69.0 256.0Z"/><circle cx="77.0" cy="256.0" r="2.2"/><path d="M71.0 251.0L84.0 261.5" stroke="#888"/></g>
<path d="M94.0 249.5H100.5L102.0 251.0H110.0V262.0H94.0Z" fill="#9b9b9b"/><path d="M94.5 253.2H109.5" stroke="#c8c8c8" stroke-width="0.8"/>
<text x="123.9" y="260.9" font-size="11" fill="#333" textLength="20.9" lengthAdjust="spacingAndGlyphs" >原点</text>
<rect x="66.0" y="270.5" width="93.0" height="19.5" fill="#f0f0f0" />
<path d="M57.5 274.5V285.5H46.5Z" fill="url(#expg)" stroke="#333" stroke-width="0.9"/>
<path d="M68.5 280.0Q77.0 270.5 85.5 280.0Q77.0 289.5 68.5 280.0Z" fill="#9c9c9c"/><circle cx="77.0" cy="280.0" r="3.3" fill="#f0f0f0"/><circle cx="77.0" cy="280.0" r="2" fill="#8a8a8a"/>
<path d="M94.0 273.5H100.5L102.0 275.0H110.0V286.0H94.0Z" fill="#9b9b9b"/><path d="M94.5 277.2H109.5" stroke="#c8c8c8" stroke-width="0.8"/>
<text x="123.9" y="284.9" font-size="11" fill="#333" textLength="25.6" lengthAdjust="spacingAndGlyphs" >ボディ</text>
<rect x="83.8" y="294.5" width="123.5" height="19.5" fill="#f0f0f0" />
<path d="M66.5 297.5L74.5 304.0L66.5 310.5Z" fill="#fafafa" stroke="#333" stroke-width="1"/>
<g stroke="#aaa" fill="none" stroke-width="1"><path d="M86.6 304.0Q94.6 295.5 102.6 304.0Q94.6 312.5 86.6 304.0Z"/><circle cx="94.6" cy="304.0" r="2.2"/><path d="M88.6 299.0L101.6 309.5" stroke="#888"/></g>
<path d="M111.5 297.5H118.0L119.5 299.0H127.5V310.0H111.5Z" fill="#9b9b9b"/><path d="M112.0 301.2H127.0" stroke="#c8c8c8" stroke-width="0.8"/>
<text x="141.8" y="308.9" font-size="11" fill="#333" textLength="56.0" lengthAdjust="spacingAndGlyphs" >グループ2 (4)</text>
<rect x="83.8" y="318.5" width="106.9" height="19.5" fill="#f0f0f0" />
<path d="M86.1 328.0Q94.6 318.5 103.1 328.0Q94.6 337.5 86.1 328.0Z" fill="#9c9c9c"/><circle cx="94.6" cy="328.0" r="3.3" fill="#f0f0f0"/><circle cx="94.6" cy="328.0" r="2" fill="#8a8a8a"/>
<path d="M111.5 321.5H118.0L119.5 323.0H127.5V334.0H111.5Z" fill="#9b9b9b"/><path d="M112.0 325.2H127.0" stroke="#c8c8c8" stroke-width="0.8"/>
<text x="141.8" y="332.9" font-size="11" fill="#333" textLength="39.4" lengthAdjust="spacingAndGlyphs" >グループ3</text>
<rect x="83.8" y="342.5" width="137.7" height="19.5" fill="#f0f0f0" />
<path d="M86.1 352.0Q94.6 342.5 103.1 352.0Q94.6 361.5 86.1 352.0Z" fill="#9c9c9c"/><circle cx="94.6" cy="352.0" r="3.3" fill="#f0f0f0"/><circle cx="94.6" cy="352.0" r="2" fill="#8a8a8a"/>
<path d="M112.5 346.0Q119.5 342.5 126.5 346.0V358.0Q119.5 361.5 112.5 358.0Z" fill="url(#cyl)" stroke="#4a4a4a" stroke-width="0.9"/><ellipse cx="119.5" cy="346.5" rx="6.6" ry="1.8" fill="#fafafa" stroke="#777" stroke-width="0.5"/>
<text x="141.8" y="356.9" font-size="11" fill="#333" textLength="70.2" lengthAdjust="spacingAndGlyphs" >ボディ・上面・前</text>
<rect x="83.8" y="366.5" width="154.4" height="19.5" fill="#f0f0f0" />
<path d="M86.1 376.0Q94.6 366.5 103.1 376.0Q94.6 385.5 86.1 376.0Z" fill="#9c9c9c"/><circle cx="94.6" cy="376.0" r="3.3" fill="#f0f0f0"/><circle cx="94.6" cy="376.0" r="2" fill="#8a8a8a"/>
<path d="M112.5 370.0Q119.5 366.5 126.5 370.0V382.0Q119.5 385.5 112.5 382.0Z" fill="url(#cyl)" stroke="#4a4a4a" stroke-width="0.9"/><ellipse cx="119.5" cy="370.5" rx="6.6" ry="1.8" fill="#fafafa" stroke="#777" stroke-width="0.5"/>
<text x="141.8" y="380.9" font-size="11" fill="#333" textLength="86.9" lengthAdjust="spacingAndGlyphs" >ボディ・上面 (1) (1)</text>
<rect x="83.8" y="390.5" width="120.5" height="19.5" fill="#f0f0f0" />
<path d="M86.1 400.0Q94.6 390.5 103.1 400.0Q94.6 409.5 86.1 400.0Z" fill="#9c9c9c"/><circle cx="94.6" cy="400.0" r="3.3" fill="#f0f0f0"/><circle cx="94.6" cy="400.0" r="2" fill="#8a8a8a"/>
<path d="M112.5 394.0Q119.5 390.5 126.5 394.0V406.0Q119.5 409.5 112.5 406.0Z" fill="url(#cyl)" stroke="#4a4a4a" stroke-width="0.9"/><ellipse cx="119.5" cy="394.5" rx="6.6" ry="1.8" fill="#fafafa" stroke="#777" stroke-width="0.5"/>
<text x="141.8" y="404.9" font-size="11" fill="#333" textLength="53.0" lengthAdjust="spacingAndGlyphs" >ボディ・底面</text>
<rect x="83.8" y="414.5" width="137.7" height="19.5" fill="#f0f0f0" />
<path d="M86.1 424.0Q94.6 414.5 103.1 424.0Q94.6 433.5 86.1 424.0Z" fill="#9c9c9c"/><circle cx="94.6" cy="424.0" r="3.3" fill="#f0f0f0"/><circle cx="94.6" cy="424.0" r="2" fill="#8a8a8a"/>
<path d="M112.5 418.0Q119.5 414.5 126.5 418.0V430.0Q119.5 433.5 112.5 430.0Z" fill="url(#cyl)" stroke="#4a4a4a" stroke-width="0.9"/><ellipse cx="119.5" cy="418.5" rx="6.6" ry="1.8" fill="#fafafa" stroke="#777" stroke-width="0.5"/>
<text x="141.8" y="428.9" font-size="11" fill="#333" textLength="70.2" lengthAdjust="spacingAndGlyphs" >ボディ・底面 (1)</text>
<rect x="83.8" y="438.5" width="106.9" height="19.5" fill="#f0f0f0" />
<path d="M86.1 448.0Q94.6 438.5 103.1 448.0Q94.6 457.5 86.1 448.0Z" fill="#9c9c9c"/><circle cx="94.6" cy="448.0" r="3.3" fill="#f0f0f0"/><circle cx="94.6" cy="448.0" r="2" fill="#8a8a8a"/>
<path d="M112.5 442.0Q119.5 438.5 126.5 442.0V454.0Q119.5 457.5 112.5 454.0Z" fill="url(#cyl)" stroke="#4a4a4a" stroke-width="0.9"/><ellipse cx="119.5" cy="442.5" rx="6.6" ry="1.8" fill="#fafafa" stroke="#777" stroke-width="0.5"/>
<text x="141.8" y="452.9" font-size="11" fill="#333" textLength="39.4" lengthAdjust="spacingAndGlyphs" >キーボード</text>
<rect x="83.8" y="462.5" width="130.6" height="19.5" fill="#f0f0f0" />
<path d="M86.1 472.0Q94.6 462.5 103.1 472.0Q94.6 481.5 86.1 472.0Z" fill="#9c9c9c"/><circle cx="94.6" cy="472.0" r="3.3" fill="#f0f0f0"/><circle cx="94.6" cy="472.0" r="2" fill="#8a8a8a"/>
<path d="M112.5 466.0Q119.5 462.5 126.5 466.0V478.0Q119.5 481.5 112.5 478.0Z" fill="url(#cyl)" stroke="#4a4a4a" stroke-width="0.9"/><ellipse cx="119.5" cy="466.5" rx="6.6" ry="1.8" fill="#fafafa" stroke="#777" stroke-width="0.5"/>
<text x="141.8" y="476.9" font-size="11" fill="#333" textLength="63.1" lengthAdjust="spacingAndGlyphs" >カセット・ボタン</text>
<rect x="83.8" y="486.5" width="115.2" height="19.5" fill="#f0f0f0" />
<g stroke="#aaa" fill="none" stroke-width="1"><path d="M86.6 496.0Q94.6 487.5 102.6 496.0Q94.6 504.5 86.6 496.0Z"/><circle cx="94.6" cy="496.0" r="2.2"/><path d="M88.6 491.0L101.6 501.5" stroke="#888"/></g>
<path d="M112.5 490.0Q119.5 486.5 126.5 490.0V502.0Q119.5 505.5 112.5 502.0Z" fill="url(#cyl)" stroke="#4a4a4a" stroke-width="0.9"/><ellipse cx="119.5" cy="490.5" rx="6.6" ry="1.8" fill="#fafafa" stroke="#777" stroke-width="0.5"/>
<text x="141.8" y="500.9" font-size="11" fill="#333" textLength="47.7" lengthAdjust="spacingAndGlyphs" >ディスプレイ</text>
<rect x="83.8" y="510.5" width="116.1" height="19.5" fill="#f0f0f0" />
<path d="M86.1 520.0Q94.6 510.5 103.1 520.0Q94.6 529.5 86.1 520.0Z" fill="#9c9c9c"/><circle cx="94.6" cy="520.0" r="3.3" fill="#f0f0f0"/><circle cx="94.6" cy="520.0" r="2" fill="#8a8a8a"/>
<path d="M112.5 514.0Q119.5 510.5 126.5 514.0V526.0Q119.5 529.5 112.5 526.0Z" fill="url(#cyl)" stroke="#4a4a4a" stroke-width="0.9"/><ellipse cx="119.5" cy="514.5" rx="6.6" ry="1.8" fill="#fafafa" stroke="#777" stroke-width="0.5"/>
<text x="141.8" y="524.9" font-size="11" fill="#333" textLength="48.6" lengthAdjust="spacingAndGlyphs" >カセット・蓋</text>
<rect x="83.8" y="534.5" width="138.3" height="19.5" fill="#f0f0f0" />
<path d="M86.1 544.0Q94.6 534.5 103.1 544.0Q94.6 553.5 86.1 544.0Z" fill="#9c9c9c"/><circle cx="94.6" cy="544.0" r="3.3" fill="#f0f0f0"/><circle cx="94.6" cy="544.0" r="2" fill="#8a8a8a"/>
<path d="M112.5 538.0Q119.5 534.5 126.5 538.0V550.0Q119.5 553.5 112.5 550.0Z" fill="url(#cyl)" stroke="#4a4a4a" stroke-width="0.9"/><ellipse cx="119.5" cy="538.5" rx="6.6" ry="1.8" fill="#fafafa" stroke="#777" stroke-width="0.5"/>
<text x="141.8" y="548.9" font-size="11" fill="#333" textLength="70.8" lengthAdjust="spacingAndGlyphs" >カセット・カウンタ</text>
<rect x="83.8" y="558.5" width="116.7" height="19.5" fill="#f0f0f0" />
<path d="M86.1 568.0Q94.6 558.5 103.1 568.0Q94.6 577.5 86.1 568.0Z" fill="#9c9c9c"/><circle cx="94.6" cy="568.0" r="3.3" fill="#f0f0f0"/><circle cx="94.6" cy="568.0" r="2" fill="#8a8a8a"/>
<path d="M112.5 562.0Q119.5 558.5 126.5 562.0V574.0Q119.5 577.5 112.5 574.0Z" fill="url(#cyl)" stroke="#4a4a4a" stroke-width="0.9"/><ellipse cx="119.5" cy="562.5" rx="6.6" ry="1.8" fill="#fafafa" stroke="#777" stroke-width="0.5"/>
<text x="141.8" y="572.9" font-size="11" fill="#333" textLength="49.2" lengthAdjust="spacingAndGlyphs" >拡張IO・蓋</text>
<rect x="83.8" y="582.5" width="160.5" height="19.5" fill="#f0f0f0" />
<path d="M86.1 592.0Q94.6 582.5 103.1 592.0Q94.6 601.5 86.1 592.0Z" fill="#9c9c9c"/><circle cx="94.6" cy="592.0" r="3.3" fill="#f0f0f0"/><circle cx="94.6" cy="592.0" r="2" fill="#8a8a8a"/>
<path d="M112.5 586.0Q119.5 582.5 126.5 586.0V598.0Q119.5 601.5 112.5 598.0Z" fill="url(#cyl)" stroke="#4a4a4a" stroke-width="0.9"/><ellipse cx="119.5" cy="586.5" rx="6.6" ry="1.8" fill="#fafafa" stroke="#777" stroke-width="0.5"/>
<text x="141.8" y="596.9" font-size="11" fill="#333" textLength="93.0" lengthAdjust="spacingAndGlyphs" >フロントパネル (1) (1)</text>
<rect x="83.8" y="606.5" width="177.7" height="19.5" fill="#f0f0f0" />
<path d="M86.1 616.0Q94.6 606.5 103.1 616.0Q94.6 625.5 86.1 616.0Z" fill="#9c9c9c"/><circle cx="94.6" cy="616.0" r="3.3" fill="#f0f0f0"/><circle cx="94.6" cy="616.0" r="2" fill="#8a8a8a"/>
<path d="M112.5 610.0Q119.5 606.5 126.5 610.0V622.0Q119.5 625.5 112.5 622.0Z" fill="url(#cyl)" stroke="#4a4a4a" stroke-width="0.9"/><ellipse cx="119.5" cy="610.5" rx="6.6" ry="1.8" fill="#fafafa" stroke="#777" stroke-width="0.5"/>
<text x="141.8" y="620.9" font-size="11" fill="#333" textLength="110.2" lengthAdjust="spacingAndGlyphs" >フロントパネル (1) (1) (1)</text>
<rect x="83.8" y="630.5" width="188.3" height="19.5" fill="#f0f0f0" />
<path d="M86.1 640.0Q94.6 630.5 103.1 640.0Q94.6 649.5 86.1 640.0Z" fill="#9c9c9c"/><circle cx="94.6" cy="640.0" r="3.3" fill="#f0f0f0"/><circle cx="94.6" cy="640.0" r="2" fill="#8a8a8a"/>
<path d="M112.5 634.0Q119.5 630.5 126.5 634.0V646.0Q119.5 649.5 112.5 646.0Z" fill="url(#cyl)" stroke="#4a4a4a" stroke-width="0.9"/><ellipse cx="119.5" cy="634.5" rx="6.6" ry="1.8" fill="#fafafa" stroke="#777" stroke-width="0.5"/>
<text x="141.8" y="644.9" font-size="11" fill="#333" textLength="120.8" lengthAdjust="spacingAndGlyphs" >ボディ・上面 (1) (1) (2) (1)</text>
<rect x="83.8" y="654.5" width="187.7" height="19.5" fill="#f0f0f0" />
<path d="M86.1 664.0Q94.6 654.5 103.1 664.0Q94.6 673.5 86.1 664.0Z" fill="#9c9c9c"/><circle cx="94.6" cy="664.0" r="3.3" fill="#f0f0f0"/><circle cx="94.6" cy="664.0" r="2" fill="#8a8a8a"/>
<path d="M112.5 658.0Q119.5 654.5 126.5 658.0V670.0Q119.5 673.5 112.5 670.0Z" fill="url(#cyl)" stroke="#4a4a4a" stroke-width="0.9"/><ellipse cx="119.5" cy="658.5" rx="6.6" ry="1.8" fill="#fafafa" stroke="#777" stroke-width="0.5"/>
<text x="141.8" y="668.9" font-size="11" fill="#333" textLength="120.2" lengthAdjust="spacingAndGlyphs" >ボディ・ディスプレイカバー (1)</text>
<rect x="83.8" y="678.5" width="187.7" height="19.5" fill="#f0f0f0" />
<path d="M86.1 688.0Q94.6 678.5 103.1 688.0Q94.6 697.5 86.1 688.0Z" fill="#9c9c9c"/><circle cx="94.6" cy="688.0" r="3.3" fill="#f0f0f0"/><circle cx="94.6" cy="688.0" r="2" fill="#8a8a8a"/>
<path d="M112.5 682.0Q119.5 678.5 126.5 682.0V694.0Q119.5 697.5 112.5 694.0Z" fill="url(#cyl)" stroke="#4a4a4a" stroke-width="0.9"/><ellipse cx="119.5" cy="682.5" rx="6.6" ry="1.8" fill="#fafafa" stroke="#777" stroke-width="0.5"/>
<text x="141.8" y="692.9" font-size="11" fill="#333" textLength="120.2" lengthAdjust="spacingAndGlyphs" >ボディ・ディスプレイカバー (2)</text>
<rect x="83.8" y="702.5" width="204.7" height="19.5" fill="#f0f0f0" />
<path d="M86.1 712.0Q94.6 702.5 103.1 712.0Q94.6 721.5 86.1 712.0Z" fill="#9c9c9c"/><circle cx="94.6" cy="712.0" r="3.3" fill="#f0f0f0"/><circle cx="94.6" cy="712.0" r="2" fill="#8a8a8a"/>
<path d="M112.5 706.0Q119.5 702.5 126.5 706.0V718.0Q119.5 721.5 112.5 718.0Z" fill="url(#cyl)" stroke="#4a4a4a" stroke-width="0.9"/><ellipse cx="119.5" cy="706.5" rx="6.6" ry="1.8" fill="#fafafa" stroke="#777" stroke-width="0.5"/>
<text x="141.8" y="716.9" font-size="11" fill="#333" textLength="137.2" lengthAdjust="spacingAndGlyphs" >ボディ・ディスプレイカバー (2) (1)</text>
<rect x="83.8" y="726.5" width="221.5" height="19.5" fill="#f0f0f0" />
<path d="M86.1 736.0Q94.6 726.5 103.1 736.0Q94.6 745.5 86.1 736.0Z" fill="#9c9c9c"/><circle cx="94.6" cy="736.0" r="3.3" fill="#f0f0f0"/><circle cx="94.6" cy="736.0" r="2" fill="#8a8a8a"/>
<path d="M112.5 730.0Q119.5 726.5 126.5 730.0V742.0Q119.5 745.5 112.5 742.0Z" fill="url(#cyl)" stroke="#4a4a4a" stroke-width="0.9"/><ellipse cx="119.5" cy="730.5" rx="6.6" ry="1.8" fill="#fafafa" stroke="#777" stroke-width="0.5"/>
<text x="141.8" y="740.9" font-size="11" fill="#333" textLength="154.0" lengthAdjust="spacingAndGlyphs" >ボディ・ディスプレイカバー (2) (1) (1)</text>
<rect x="83.8" y="750.5" width="204.7" height="19.5" fill="#f0f0f0" />
<path d="M86.1 760.0Q94.6 750.5 103.1 760.0Q94.6 769.5 86.1 760.0Z" fill="#9c9c9c"/><circle cx="94.6" cy="760.0" r="3.3" fill="#f0f0f0"/><circle cx="94.6" cy="760.0" r="2" fill="#8a8a8a"/>
<path d="M112.5 754.0Q119.5 750.5 126.5 754.0V766.0Q119.5 769.5 112.5 766.0Z" fill="url(#cyl)" stroke="#4a4a4a" stroke-width="0.9"/><ellipse cx="119.5" cy="754.5" rx="6.6" ry="1.8" fill="#fafafa" stroke="#777" stroke-width="0.5"/>
<text x="141.8" y="764.9" font-size="11" fill="#333" textLength="137.2" lengthAdjust="spacingAndGlyphs" >ボディ・ディスプレイカバー (1) (1)</text>
<rect x="83.8" y="774.5" width="121.4" height="19.5" fill="#f0f0f0" />
<path d="M86.1 784.0Q94.6 774.5 103.1 784.0Q94.6 793.5 86.1 784.0Z" fill="#9c9c9c"/><circle cx="94.6" cy="784.0" r="3.3" fill="#f0f0f0"/><circle cx="94.6" cy="784.0" r="2" fill="#8a8a8a"/>
<path d="M112.5 778.0Q119.5 774.5 126.5 778.0V790.0Q119.5 793.5 112.5 790.0Z" fill="url(#cyl)" stroke="#4a4a4a" stroke-width="0.9"/><ellipse cx="119.5" cy="778.5" rx="6.6" ry="1.8" fill="#fafafa" stroke="#777" stroke-width="0.5"/>
<text x="141.8" y="788.9" font-size="11" fill="#333" textLength="53.9" lengthAdjust="spacingAndGlyphs" >内部フレーム</text>
<rect x="83.8" y="798.5" width="166.7" height="19.5" fill="#f0f0f0" />
<path d="M86.1 808.0Q94.6 798.5 103.1 808.0Q94.6 817.5 86.1 808.0Z" fill="#9c9c9c"/><circle cx="94.6" cy="808.0" r="3.3" fill="#f0f0f0"/><circle cx="94.6" cy="808.0" r="2" fill="#8a8a8a"/>
<path d="M112.5 802.0Q119.5 798.5 126.5 802.0V814.0Q119.5 817.5 112.5 814.0Z" fill="url(#cyl)" stroke="#4a4a4a" stroke-width="0.9"/><ellipse cx="119.5" cy="802.5" rx="6.6" ry="1.8" fill="#fafafa" stroke="#777" stroke-width="0.5"/>
<text x="141.8" y="812.9" font-size="11" fill="#333" textLength="99.2" lengthAdjust="spacingAndGlyphs" >ディスプレイ (1) (1) (1)</text>
<rect x="83.8" y="822.5" width="149.7" height="19.5" fill="#f0f0f0" />
<path d="M86.1 832.0Q94.6 822.5 103.1 832.0Q94.6 841.5 86.1 832.0Z" fill="#9c9c9c"/><circle cx="94.6" cy="832.0" r="3.3" fill="#f0f0f0"/><circle cx="94.6" cy="832.0" r="2" fill="#8a8a8a"/>
<path d="M112.5 826.0Q119.5 822.5 126.5 826.0V838.0Q119.5 841.5 112.5 838.0Z" fill="url(#cyl)" stroke="#4a4a4a" stroke-width="0.9"/><ellipse cx="119.5" cy="826.5" rx="6.6" ry="1.8" fill="#fafafa" stroke="#777" stroke-width="0.5"/>
<text x="141.8" y="836.9" font-size="11" fill="#333" textLength="82.2" lengthAdjust="spacingAndGlyphs" >ディスプレイ (1) (1)</text>
<rect x="66.0" y="846.5" width="108.8" height="19.5" fill="#f0f0f0" />
<path d="M48.5 849.5L56.5 856.0L48.5 862.5Z" fill="#fafafa" stroke="#333" stroke-width="1"/>
<g stroke="#aaa" fill="none" stroke-width="1"><path d="M69.0 856.0Q77.0 847.5 85.0 856.0Q77.0 864.5 69.0 856.0Z"/><circle cx="77.0" cy="856.0" r="2.2"/><path d="M71.0 851.0L84.0 861.5" stroke="#888"/></g>
<path d="M94.0 849.5H100.5L102.0 851.0H110.0V862.0H94.0Z" fill="#9b9b9b"/><path d="M94.5 853.2H109.5" stroke="#c8c8c8" stroke-width="0.8"/>
<text x="123.6" y="860.9" font-size="11" fill="#333" textLength="41.7" lengthAdjust="spacingAndGlyphs" >キャンバス</text>
<rect x="66.0" y="870.5" width="139.5" height="19.5" fill="#f0f0f0" />
<path d="M48.5 873.5L56.5 880.0L48.5 886.5Z" fill="#fafafa" stroke="#333" stroke-width="1"/>
<path d="M68.5 880.0Q77.0 870.5 85.5 880.0Q77.0 889.5 68.5 880.0Z" fill="#9c9c9c"/><circle cx="77.0" cy="880.0" r="3.3" fill="#f0f0f0"/><circle cx="77.0" cy="880.0" r="2" fill="#8a8a8a"/>
<path d="M94.0 873.5H100.5L102.0 875.0H110.0V886.0H94.0Z" fill="#9b9b9b"/><path d="M94.5 877.2H109.5" stroke="#c8c8c8" stroke-width="0.8"/>
<text x="123.6" y="884.9" font-size="11" fill="#333" textLength="72.4" lengthAdjust="spacingAndGlyphs" >コンストラクション</text>
<rect x="66.0" y="894.5" width="85.8" height="19.5" fill="#f0f0f0" />
<path d="M69.0 911.5L71.5 909.0H81.0L78.5 911.5Z" fill="#bbb"/><path d="M69.0 899.5H78.0V909.8H69.0Z" fill="#6aade4"/><path d="M69.0 899.5L71.5 896.5H81.0L78.0 899.5Z" fill="#8cc8f5"/><path d="M78.0 899.5L81.0 896.5V907.0L78.0 909.8Z" fill="#4a90c8"/><path d="M83.5 908.5V897.5" stroke="#222" stroke-width="0.9"/><path d="M82.0 898.5L83.5 895.5L85.0 898.5Z" fill="#222"/>
<text x="99.2" y="908.9" font-size="11" fill="#333" textLength="43.1" lengthAdjust="spacingAndGlyphs" >押し出し1</text>
<rect x="66.0" y="918.5" width="92.4" height="19.5" fill="#f0f0f0" />
<path d="M69.0 935.5L71.5 933.0H81.0L78.5 935.5Z" fill="#bbb"/><path d="M69.0 923.5H78.0V933.8H69.0Z" fill="#6aade4"/><path d="M69.0 923.5L71.5 920.5H81.0L78.0 923.5Z" fill="#8cc8f5"/><path d="M78.0 923.5L81.0 920.5V931.0L78.0 933.8Z" fill="#4a90c8"/><path d="M83.5 932.5V921.5" stroke="#222" stroke-width="0.9"/><path d="M82.0 922.5L83.5 919.5L85.0 922.5Z" fill="#222"/>
<text x="99.2" y="932.9" font-size="11" fill="#333" textLength="49.7" lengthAdjust="spacingAndGlyphs" >押し出し39</text>
<rect x="66.0" y="942.5" width="92.4" height="19.5" fill="#f0f0f0" />
<path d="M69.0 959.5L71.5 957.0H81.0L78.5 959.5Z" fill="#bbb"/><path d="M69.0 947.5H78.0V957.8H69.0Z" fill="#6aade4"/><path d="M69.0 947.5L71.5 944.5H81.0L78.0 947.5Z" fill="#8cc8f5"/><path d="M78.0 947.5L81.0 944.5V955.0L78.0 957.8Z" fill="#4a90c8"/><path d="M83.5 956.5V945.5" stroke="#222" stroke-width="0.9"/><path d="M82.0 946.5L83.5 943.5L85.0 946.5Z" fill="#222"/>
<text x="99.2" y="956.9" font-size="11" fill="#333" textLength="49.7" lengthAdjust="spacingAndGlyphs" >押し出し49</text>
<rect x="66.0" y="966.5" width="92.4" height="19.5" fill="#f0f0f0" />
<path d="M69.0 983.5L71.5 981.0H81.0L78.5 983.5Z" fill="#bbb"/><path d="M69.0 971.5H78.0V981.8H69.0Z" fill="#6aade4"/><path d="M69.0 971.5L71.5 968.5H81.0L78.0 971.5Z" fill="#8cc8f5"/><path d="M78.0 971.5L81.0 968.5V979.0L78.0 981.8Z" fill="#4a90c8"/><path d="M83.5 980.5V969.5" stroke="#222" stroke-width="0.9"/><path d="M82.0 970.5L83.5 967.5L85.0 970.5Z" fill="#222"/>
<text x="99.2" y="980.9" font-size="11" fill="#333" textLength="49.7" lengthAdjust="spacingAndGlyphs" >押し出し69</text>
<rect x="66.0" y="990.5" width="92.4" height="19.5" fill="#f0f0f0" />
<path d="M69.0 1007.5L71.5 1005.0H81.0L78.5 1007.5Z" fill="#bbb"/><path d="M69.0 995.5H78.0V1005.8H69.0Z" fill="#6aade4"/><path d="M69.0 995.5L71.5 992.5H81.0L78.0 995.5Z" fill="#8cc8f5"/><path d="M78.0 995.5L81.0 992.5V1003.0L78.0 1005.8Z" fill="#4a90c8"/><path d="M83.5 1004.5V993.5" stroke="#222" stroke-width="0.9"/><path d="M82.0 994.5L83.5 991.5L85.0 994.5Z" fill="#222"/>
<text x="99.2" y="1004.9" font-size="11" fill="#333" textLength="49.7" lengthAdjust="spacingAndGlyphs" >押し出し70</text>
<rect x="66.0" y="1014.5" width="92.4" height="19.5" fill="#f0f0f0" />
<path d="M69.0 1031.5L71.5 1029.0H81.0L78.5 1031.5Z" fill="#bbb"/><path d="M69.0 1019.5H78.0V1029.8H69.0Z" fill="#6aade4"/><path d="M69.0 1019.5L71.5 1016.5H81.0L78.0 1019.5Z" fill="#8cc8f5"/><path d="M78.0 1019.5L81.0 1016.5V1027.0L78.0 1029.8Z" fill="#4a90c8"/><path d="M83.5 1028.5V1017.5" stroke="#222" stroke-width="0.9"/><path d="M82.0 1018.5L83.5 1015.5L85.0 1018.5Z" fill="#222"/>
<text x="99.2" y="1028.9" font-size="11" fill="#333" textLength="49.7" lengthAdjust="spacingAndGlyphs" >押し出し72</text>
<rect x="66.0" y="1038.5" width="76.6" height="19.5" fill="#f0f0f0" />
<path d="M69.5 1055.0V1046.0Q70.5 1041.5 76.0 1041.5L77.0 1042.0V1055.0Z" fill="#dcdcdc" stroke="#555" stroke-width="0.9"/><path d="M75.0 1042.5L80.0 1040.5L83.5 1052.0L78.5 1054.5Z" fill="#4a90d0"/><path d="M81.5 1040.0L83.5 1044.5" stroke="#444" stroke-width="0.8"/>
<text x="99.2" y="1052.9" font-size="11" fill="#333" textLength="33.9" lengthAdjust="spacingAndGlyphs" >勾配75</text>
<rect x="66.0" y="1062.5" width="76.6" height="19.5" fill="#f0f0f0" />
<path d="M69.5 1079.0V1070.0Q70.5 1065.5 76.0 1065.5L77.0 1066.0V1079.0Z" fill="#dcdcdc" stroke="#555" stroke-width="0.9"/><path d="M75.0 1066.5L80.0 1064.5L83.5 1076.0L78.5 1078.5Z" fill="#4a90d0"/><path d="M81.5 1064.0L83.5 1068.5" stroke="#444" stroke-width="0.8"/>
<text x="99.2" y="1076.9" font-size="11" fill="#333" textLength="33.9" lengthAdjust="spacingAndGlyphs" >勾配76</text>
<rect x="66.0" y="1086.5" width="76.6" height="19.5" fill="#f0f0f0" />
<path d="M69.5 1103.0V1094.0Q70.5 1089.5 76.0 1089.5L77.0 1090.0V1103.0Z" fill="#dcdcdc" stroke="#555" stroke-width="0.9"/><path d="M75.0 1090.5L80.0 1088.5L83.5 1100.0L78.5 1102.5Z" fill="#4a90d0"/><path d="M81.5 1088.0L83.5 1092.5" stroke="#444" stroke-width="0.8"/>
<text x="99.2" y="1100.9" font-size="11" fill="#333" textLength="33.9" lengthAdjust="spacingAndGlyphs" >勾配77</text>
<rect x="13.500" y="1131.500" width="297" height="24" fill="#f2f2f2" stroke="#d4d4d4"/>
<text x="37.0" y="1147.0" font-size="10.5" fill="#555" textLength="31.0" lengthAdjust="spacingAndGlyphs" >コメント</text>
<circle cx="295" cy="1143.500" r="4" fill="#222"/><path d="M292.500 1143.500H297.500M295 1141V1146" stroke="#f2f2f2" stroke-width="1.200"/>
</g>
<g id="navbar">
<rect x="849.5" y="1130.0" width="237.5" height="23.0" fill="#efefef" />
<g stroke="#222" stroke-width="1.100" fill="none"><ellipse cx="861" cy="1143.500" rx="7" ry="2.800"/><path d="M861 1134V1151"/><path d="M858.500 1137L861 1133.500L863.500 1137"/><path d="M855.500 1144.500L853.500 1142L857 1141"/></g>
<path d="M875.0 1140H880.0L877.5 1143.500Z" fill="#222"/>
<g stroke="#222" stroke-width="1" fill="none"><rect x="887" y="1139.500" width="14" height="9.500"/><rect x="890" y="1142.500" width="8" height="3.500" fill="#bbb"/><path d="M889 1139.500L891.500 1135L899 1137.500"/></g>
<path d="M913 1142L914.500 1148Q916 1151 919 1151H922Q925 1150 925.500 1146L927 1140.500Q926.500 1139.500 925.500 1140L924.500 1143L924 1137Q923 1136 922.500 1137L922 1142.500L921 1136Q920 1135 919.500 1136L919.500 1142.500L917.500 1137.500Q916.500 1137 916.500 1138L917.500 1145.500L914.500 1141.500Q913.500 1141 913 1142Z" fill="#fff" stroke="#222" stroke-width="0.900"/>
<circle cx="943.500" cy="1141" r="4.500" fill="#cfe3f5" stroke="#222" stroke-width="1.200"/><path d="M947 1144.500L951 1149" stroke="#222" stroke-width="2"/><path d="M950 1136H954M952 1134V1138" stroke="#222" stroke-width="0.900"/><path d="M950 1140H954" stroke="#222" stroke-width="0.900"/>
<rect x="964" y="1135" width="13" height="12" fill="none" stroke="#222" stroke-width="0.900" stroke-dasharray="2 1.500"/><circle cx="970.500" cy="1141" r="5" fill="#e4eef8" stroke="#222" stroke-width="1.200"/><path d="M974 1145L978.500 1150" stroke="#222" stroke-width="2"/>
<path d="M985.0 1140H990.0L987.5 1143.500Z" fill="#222"/>
<rect x="998.500" y="1135.500" width="14" height="10" fill="#6fa8dc" stroke="#333" stroke-width="1"/><rect x="1000.500" y="1137.500" width="10" height="6" fill="#a9cdf0"/><path d="M1003 1149.500H1008M1005.500 1145.500V1149.500" stroke="#333" stroke-width="1.200"/>
<path d="M1015.5 1140H1020.5L1018.0 1143.500Z" fill="#222"/>
<rect x="1029.500" y="1135.500" width="14" height="14" fill="#ddd" stroke="#333" stroke-width="0.800"/><path d="M1033 1135.500V1149.500M1036.500 1135.500V1149.500M1040 1135.500V1149.500M1029.500 1139H1043.500M1029.500 1142.500H1043.500M1029.500 1146H1043.500" stroke="#555" stroke-width="0.700"/>
<path d="M1046.5 1140H1051.5L1049.0 1143.500Z" fill="#222"/>
<g fill="#7fb2e5" stroke="#2d5c8c" stroke-width="0.900"><rect x="1059.500" y="1135.500" width="6.500" height="5.500"/><rect x="1067.500" y="1135.500" width="6.500" height="5.500"/><rect x="1059.500" y="1143" width="6.500" height="5.500"/><rect x="1067.500" y="1143" width="6.500" height="5.500"/></g>
<path d="M1078.0 1140H1083.0L1080.5 1143.500Z" fill="#222"/>
</g>
<g id="taskbar">
<rect x="0.0" y="1160.0" width="1928.0" height="8.0" fill="#111111" />
<rect x="56.0" y="1160.0" width="288.0" height="8.0" fill="#f0f0f0" />
<rect x="56.0" y="1160.0" width="288.0" height="1.0" fill="#cfcfcf" />
<rect x="738.0" y="1160.0" width="48.0" height="8.0" fill="#3a3a3a" />
<rect x="1921.0" y="1160.0" width="1.0" height="8.0" fill="#555" />
<text x="1830.0" y="1173.0" font-size="9" fill="#fff" >12:55</text>
</g>
</svg></body></html>
